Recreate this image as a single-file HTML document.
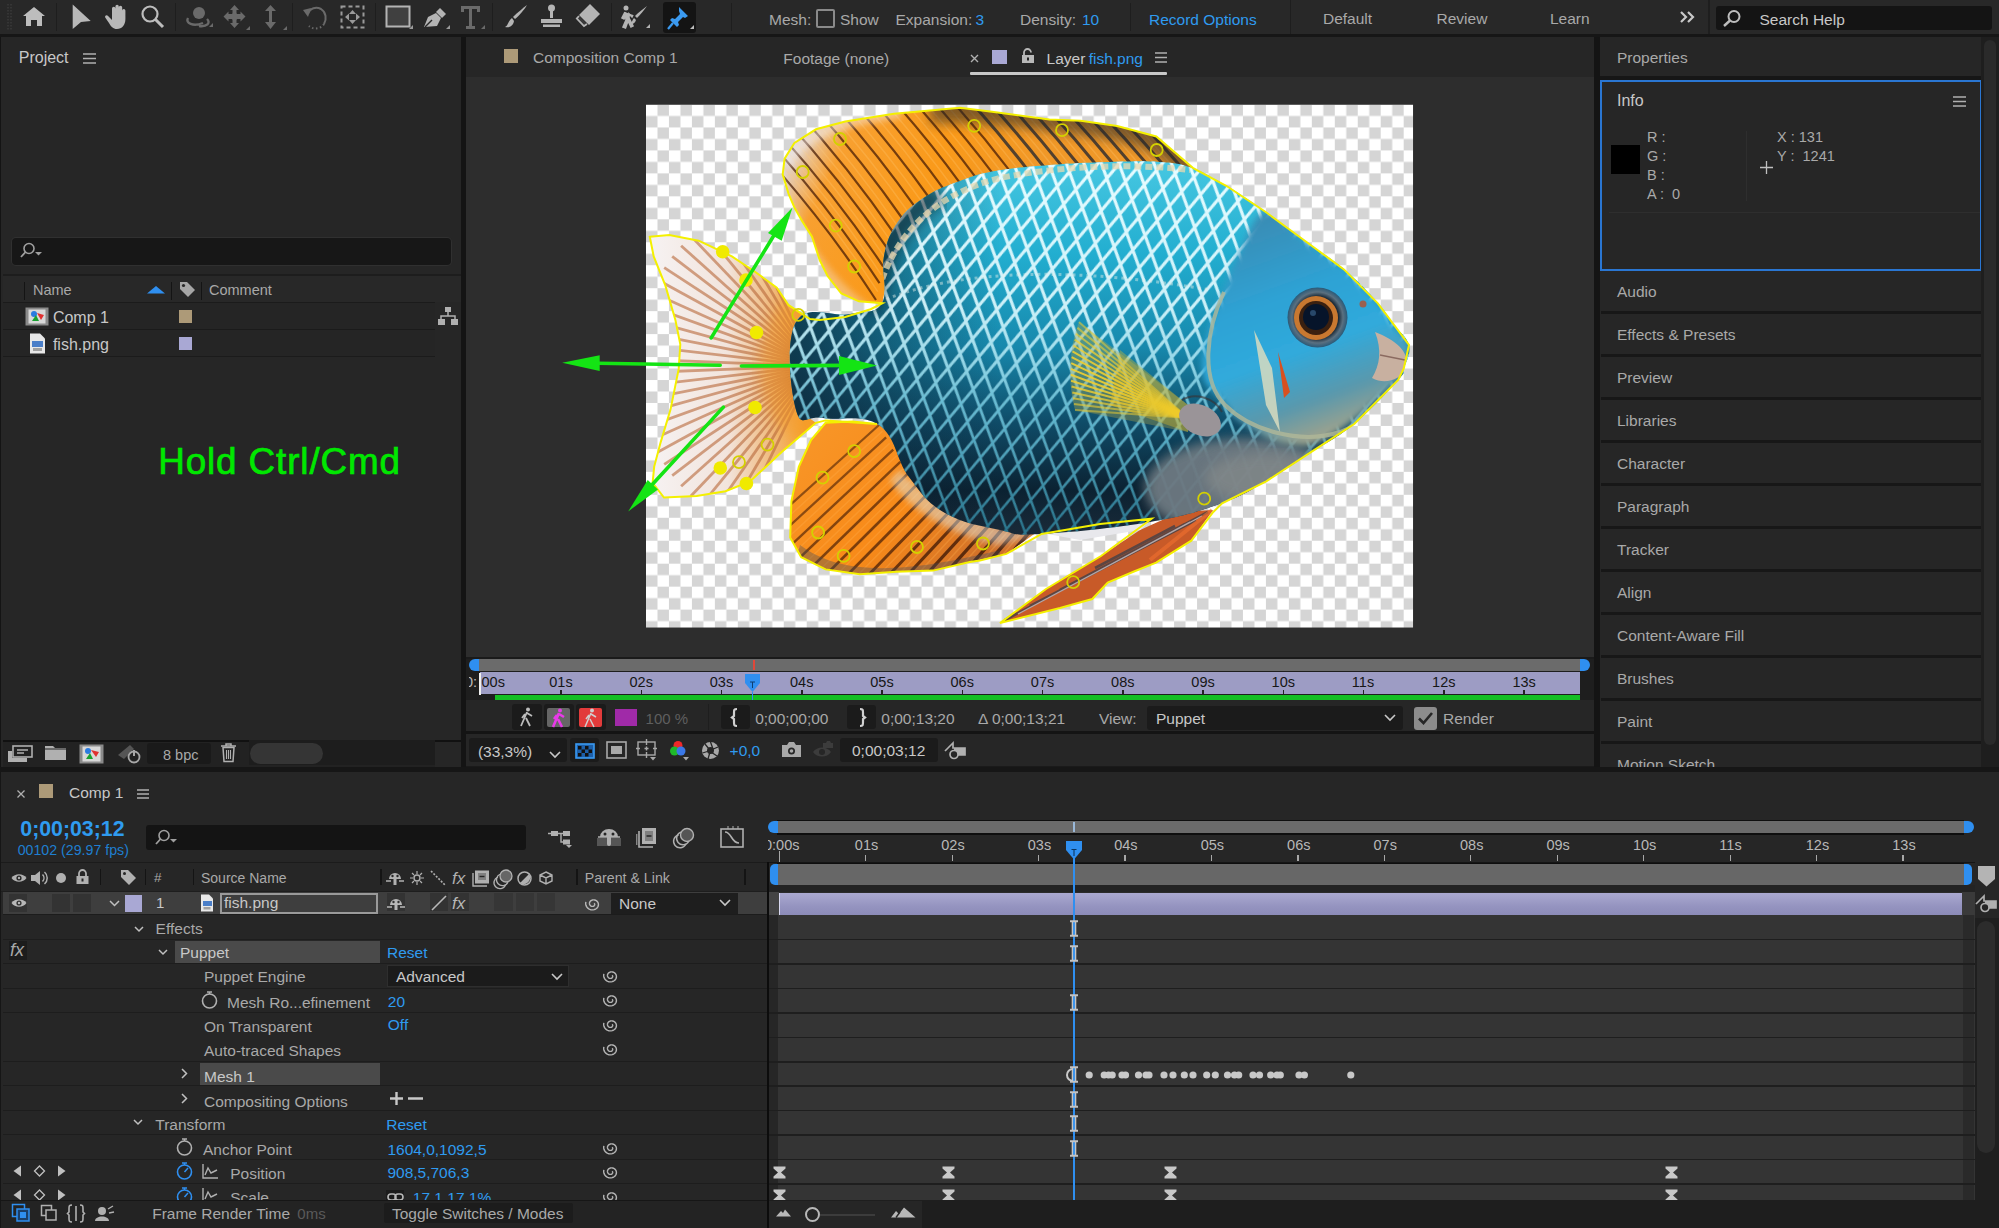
<!DOCTYPE html><html><head><meta charset="utf-8"><style>
html,body{margin:0;padding:0;width:1999px;height:1228px;overflow:hidden;background:#161616;font-family:"Liberation Sans",sans-serif;}
.t{position:absolute;white-space:nowrap;}
.r{position:absolute;}
.s{position:absolute;overflow:visible;}
</style></head><body>
<div class="r" style="left:0px;top:0px;width:1999px;height:34px;background:#282828;"></div>
<div class="r" style="left:56px;top:3px;width:1px;height:28px;background:#1e1e1e;"></div>
<div class="r" style="left:175px;top:3px;width:1px;height:28px;background:#1e1e1e;"></div>
<div class="r" style="left:292px;top:3px;width:1px;height:28px;background:#1e1e1e;"></div>
<div class="r" style="left:375px;top:3px;width:1px;height:28px;background:#1e1e1e;"></div>
<div class="r" style="left:492px;top:3px;width:1px;height:28px;background:#1e1e1e;"></div>
<div class="r" style="left:611px;top:3px;width:1px;height:28px;background:#1e1e1e;"></div>
<div class="r" style="left:731px;top:3px;width:1px;height:28px;background:#1e1e1e;"></div>
<div class="r" style="left:1130px;top:3px;width:1px;height:28px;background:#1e1e1e;"></div>
<div class="r" style="left:1290px;top:0px;width:1px;height:34px;background:#1e1e1e;"></div>
<div class="r" style="left:1708px;top:0px;width:2px;height:34px;background:#1e1e1e;"></div>
<div class="t " style="left:769px;top:11.5px;font-size:15.5px;line-height:15.5px;color:#a9a9a9;font-weight:normal;">Mesh:</div>
<div class="r" style="left:816px;top:9px;width:19px;height:19px;background:transparent;border:2px solid #8a8a8a;border-radius:2px;box-sizing:border-box;"></div>
<div class="t " style="left:840px;top:11.5px;font-size:15.5px;line-height:15.5px;color:#a9a9a9;font-weight:normal;">Show</div>
<div class="t " style="left:895.5px;top:11.5px;font-size:15.5px;line-height:15.5px;color:#a9a9a9;font-weight:normal;">Expansion:</div>
<div class="t " style="left:975.5px;top:11.5px;font-size:15.5px;line-height:15.5px;color:#2f9bf0;font-weight:normal;">3</div>
<div class="t " style="left:1020px;top:11.5px;font-size:15.5px;line-height:15.5px;color:#a9a9a9;font-weight:normal;">Density:</div>
<div class="t " style="left:1082px;top:11.5px;font-size:15.5px;line-height:15.5px;color:#2f9bf0;font-weight:normal;">10</div>
<div class="t " style="left:1149px;top:11.5px;font-size:15.5px;line-height:15.5px;color:#2f9bf0;font-weight:normal;">Record Options</div>
<div class="t " style="left:1323px;top:11.4px;font-size:15.5px;line-height:15.5px;color:#a9a9a9;font-weight:normal;">Default</div>
<div class="t " style="left:1436.5px;top:11.4px;font-size:15.5px;line-height:15.5px;color:#a9a9a9;font-weight:normal;">Review</div>
<div class="t " style="left:1550px;top:11.4px;font-size:15.5px;line-height:15.5px;color:#a9a9a9;font-weight:normal;">Learn</div>
<svg class="s" style="left:1680px;top:11px;" width="16" height="12" viewBox="0 0 16 12"><path d="M1 1 L6 6 L1 11 M8 1 L13 6 L8 11" stroke="#c8c8c8" stroke-width="2.2" fill="none"/></svg>
<div class="r" style="left:1716px;top:6px;width:276px;height:24px;background:#141414;border-radius:3px;"></div>
<svg class="s" style="left:1722px;top:10px;" width="20" height="17" viewBox="0 0 20 17"><circle cx="12" cy="6.5" r="5.5" stroke="#bdbdbd" stroke-width="2" fill="none"/><path d="M8 10.5 L2 16" stroke="#bdbdbd" stroke-width="2.4"/></svg>
<div class="t " style="left:1759.5px;top:12.3px;font-size:15.5px;line-height:15.5px;color:#c8c8c8;font-weight:normal;">Search Help</div>
<svg class="s" style="left:7px;top:4px;" width="5" height="26" viewBox="0 0 5 26"><path d="M1 0 V26 M4 0 V26" stroke="#3a3a3a" stroke-width="1.5" stroke-dasharray="1.5 1.5"/></svg>
<svg class="s" style="left:22px;top:6px;" width="24" height="21" viewBox="0 0 24 21"><path d="M12 1 L1 10 H4 V20 H9 V14 H15 V20 H20 V10 H23 Z" fill="#bdbdbd"/></svg>
<svg class="s" style="left:70px;top:3px;" width="24" height="28" viewBox="0 0 24 28"><path d="M2.7 1.4 L20.7 18 L11 18.9 L2.7 25.9Z" fill="#b8b8b8"/></svg>
<svg class="s" style="left:103px;top:4px;" width="26" height="26" viewBox="0 0 26 26"><path d="M9 13 V4.5 a1.7 1.7 0 0 1 3.4 0 V11 V2.5 a1.7 1.7 0 0 1 3.4 0 V11 V3.5 a1.7 1.7 0 0 1 3.4 0 V12 V6.5 a1.6 1.6 0 0 1 3.2 0 V15 C22.4 21 19 25 14 25 C10 25 8 22.5 6 19 L2.2 13.5 a1.6 1.6 0 0 1 2.6 -1.8 L9 16Z" fill="#b8b8b8"/></svg>
<svg class="s" style="left:140px;top:4px;" width="25" height="25" viewBox="0 0 25 25"><circle cx="10" cy="10" r="7.5" stroke="#bdbdbd" stroke-width="2.2" fill="none"/><path d="M15.5 15.5 L23 23" stroke="#bdbdbd" stroke-width="3"/></svg>
<svg class="s" style="left:185px;top:5px;" width="28" height="24" viewBox="0 0 28 24"><circle cx="14" cy="8" r="6" fill="#6a6a6a"/><path d="M3 13 C0 18 8 22 18 18 M22 14 C26 18 22 22 14 21" stroke="#6a6a6a" stroke-width="2.4" fill="none"/><path d="M24 22 L28 22 L28 18Z" fill="#6a6a6a"/></svg>
<svg class="s" style="left:222px;top:4px;" width="28" height="26" viewBox="0 0 28 26"><path d="M12.5 1 L17 6 H14.5 V10 H18.5 V7.5 L23.5 12.5 L18.5 17.5 V15 H14.5 V19 H17 L12.5 24 L8 19 H10.5 V15 H6.5 V17.5 L1.5 12.5 L6.5 7.5 V10 H10.5 V6 H8Z" fill="#6a6a6a"/><circle cx="12.5" cy="12.5" r="3.5" fill="#6a6a6a"/><path d="M24 26 L28 26 L28 22Z" fill="#6a6a6a"/></svg>
<svg class="s" style="left:261px;top:4px;" width="26" height="26" viewBox="0 0 26 26"><path d="M9.5 1 L15 7 H11 V18 H15 L9.5 25 L4 18 H8 V7 H4Z" fill="#6a6a6a"/><path d="M22 26 L26 26 L26 22Z" fill="#6a6a6a"/></svg>
<svg class="s" style="left:302px;top:4px;" width="26" height="26" viewBox="0 0 26 26"><path d="M6 10 C8 4 14 2.5 19 5 C24 8 25 15 22 20" stroke="#6a6a6a" stroke-width="2" fill="none"/><path d="M22 20 C19 25 11 26 7 22" stroke="#6a6a6a" stroke-width="2" fill="none" stroke-dasharray="1.5 2.5"/><path d="M1 6 L9 4 L6 13Z" fill="#6a6a6a"/></svg>
<svg class="s" style="left:340px;top:5px;" width="25" height="24" viewBox="0 0 25 24"><rect x="1.5" y="1.5" width="22" height="21" stroke="#9a9a9a" stroke-width="2" fill="none" stroke-dasharray="4 3"/><path d="M12.5 5 L9 9 H16Z M12.5 19 L9 15 H16Z M5 12 L9 8.5 V15.5Z M20 12 L16 8.5 V15.5Z" fill="#9a9a9a"/></svg>
<svg class="s" style="left:385px;top:5px;" width="29" height="25" viewBox="0 0 29 25"><rect x="1.5" y="1.5" width="23" height="20" stroke="#b4b4b4" stroke-width="2" fill="#404040"/><path d="M24 24 L28 24 L28 20Z" fill="#9a9a9a"/></svg>
<svg class="s" style="left:422px;top:4px;" width="28" height="26" viewBox="0 0 28 26"><path d="M2 23 L6 13 L14 9 L19 14 L15 22 Z" fill="#b4b4b4"/><path d="M14 8 L18 4 L24 10 L20 14Z" fill="#b4b4b4"/><path d="M3 23 L10 16" stroke="#282828" stroke-width="1.5"/><path d="M24 25 L28 25 L28 21Z" fill="#9a9a9a"/></svg>
<svg class="s" style="left:459px;top:5px;" width="27" height="25" viewBox="0 0 27 25"><path d="M2 1 H21 V7 H18 V4 H13 V21 H16 V24 H7 V21 H10 V4 H5 V7 H2Z" fill="#6a6a6a"/><path d="M22 24 L26 24 L26 20Z" fill="#6a6a6a"/></svg>
<svg class="s" style="left:504px;top:4px;" width="24" height="25" viewBox="0 0 24 25"><path d="M23 1 C20 6 15 12 11 15 L9 13 C13 9 19 4 23 1Z" fill="#b4b4b4"/><path d="M8 14 L10 17 C9 23 4 24 1 23 C4 22 4 17 8 14Z" fill="#b4b4b4"/></svg>
<svg class="s" style="left:539px;top:4px;" width="25" height="23" viewBox="0 0 25 23"><circle cx="12.5" cy="4" r="3.5" fill="#b4b4b4"/><path d="M11 7 H14 V14 H11Z M2 15 H23 V19 H2Z M4 20.5 H21 V23 H4Z" fill="#b4b4b4"/></svg>
<svg class="s" style="left:576px;top:3px;" width="25" height="26" viewBox="0 0 25 26"><path d="M14 1 L24 11 L13 22 L3 12Z" fill="#b4b4b4"/><path d="M3 13 L0.8 15.5 L8 23 L11 21" stroke="#b4b4b4" stroke-width="1.8" fill="#3a3a3a"/></svg>
<svg class="s" style="left:620px;top:4px;" width="30" height="25" viewBox="0 0 30 25"><circle cx="6" cy="4" r="2.5" fill="#b4b4b4"/><path d="M5 8 L2 14 L4 15 L6 11 L6 16 L3 23 L5.5 24 L8 17 L11 23 L13 22 L9 14 L9 10 L12 13 L13 11" stroke="#b4b4b4" stroke-width="1.6" fill="#b4b4b4"/><path d="M27 2 C24 6 20 11 17 14 L15 12 C18 9 23 5 27 2Z M14 14 L16 16 C15 20 11 21 10 20 C12 19 12 16 14 14Z" fill="#b4b4b4"/><path d="M26 24 L30 24 L30 20Z" fill="#b4b4b4"/></svg>
<div class="r" style="left:663px;top:2px;width:33px;height:31px;background:#141414;border-radius:3px;"></div>
<svg class="s" style="left:666px;top:5px;" width="28" height="26" viewBox="0 0 28 26"><path d="M13 2 L22 11 L19 13 L17 12 L12 17 L13 20 L11 22 L4 15 L6 13 L9 14 L14 9 L13 6Z" fill="#3b9af0"/><path d="M7 18 L2 24" stroke="#3b9af0" stroke-width="2.2"/><path d="M24 24 L28 24 L28 20Z" fill="#bdbdbd"/></svg>
<div class="r" style="left:0px;top:34px;width:1999px;height:3px;background:#161616;"></div>
<div class="r" style="left:1px;top:37px;width:460px;height:730px;background:#262626;"></div>
<div class="t " style="left:18.75px;top:50.2px;font-size:16px;line-height:16px;color:#c8c8c8;font-weight:normal;">Project</div>
<svg class="s" style="left:83px;top:53px;" width="13" height="11" viewBox="0 0 13 11"><path d="M0 1 H13 M0 5.5 H13 M0 10 H13" stroke="#b0b0b0" stroke-width="1.6"/></svg>
<div class="r" style="left:12px;top:238px;width:439px;height:26.5px;background:#171717;border-radius:4px;box-shadow:0 0 0 1px #303030;"></div>
<svg class="s" style="left:20px;top:242px;" width="26" height="18" viewBox="0 0 26 18"><circle cx="9" cy="6.5" r="5" stroke="#a0a0a0" stroke-width="1.6" fill="none"/><path d="M5.5 10 L1 15" stroke="#a0a0a0" stroke-width="1.8"/><path d="M15 10 H22 L18.5 13.5Z" fill="#a0a0a0"/></svg>
<div class="r" style="left:3px;top:274px;width:458px;height:1.5px;background:#1d1d1d;"></div>
<div class="r" style="left:3px;top:275.5px;width:458px;height:26.5px;background:#282828;"></div>
<div class="r" style="left:3px;top:302px;width:432px;height:1px;background:#1b1b1b;"></div>
<div class="r" style="left:24px;top:282px;width:1px;height:18px;background:#141414;"></div>
<div class="r" style="left:171px;top:282px;width:1px;height:18px;background:#141414;"></div>
<div class="r" style="left:201px;top:282px;width:1px;height:18px;background:#141414;"></div>
<div class="t " style="left:33px;top:282.7px;font-size:14.5px;line-height:14.5px;color:#a9a9a9;font-weight:normal;">Name</div>
<svg class="s" style="left:147px;top:286px;" width="18" height="8" viewBox="0 0 18 8"><path d="M0 7.5 L9 0 L18 7.5Z" fill="#2f8ff0"/></svg>
<svg class="s" style="left:179px;top:281px;" width="17" height="17" viewBox="0 0 17 17"><path d="M1 1 H8 L16 9 L9 16 L1 8Z" fill="#a6a6a6"/><circle cx="4.5" cy="4.5" r="1.6" fill="#262626"/></svg>
<div class="t " style="left:209px;top:282.7px;font-size:14.5px;line-height:14.5px;color:#a9a9a9;font-weight:normal;">Comment</div>
<div class="r" style="left:3px;top:303px;width:432px;height:26px;background:#252525;"></div>
<div class="r" style="left:3px;top:329px;width:432px;height:1px;background:#1b1b1b;"></div>
<div class="r" style="left:3px;top:330px;width:432px;height:26px;background:#252525;"></div>
<div class="r" style="left:3px;top:356px;width:432px;height:1px;background:#1b1b1b;"></div>
<svg class="s" style="left:25px;top:307px;" width="24" height="19" viewBox="0 0 24 19"><rect x="0.5" y="0.5" width="23" height="18" fill="#8a8a8a"/><rect x="3.5" y="2.5" width="17" height="14" fill="#d8d8d8"/><circle cx="9" cy="7" r="3" fill="#2a7be0"/><path d="M7 14 L11 8 L14 14Z" fill="#18a030"/><path d="M12 6 L19 8 L16 13Z" fill="#e03030"/></svg>
<div class="t " style="left:52.9px;top:309.5px;font-size:16px;line-height:16px;color:#c8c8c8;font-weight:normal;">Comp 1</div>
<div class="r" style="left:179px;top:310px;width:13px;height:13px;background:#ad9a78;"></div>
<svg class="s" style="left:29px;top:333px;" width="17" height="21" viewBox="0 0 17 21"><path d="M1 0.5 H11 L16 5.5 V20.5 H1Z" fill="#e8e8e8"/><rect x="3" y="8" width="11" height="6" fill="#4a7ec8"/><rect x="4" y="15" width="9" height="3" fill="#a0a0a0"/></svg>
<div class="t " style="left:52.9px;top:336.5px;font-size:16px;line-height:16px;color:#c8c8c8;font-weight:normal;">fish.png</div>
<div class="r" style="left:179px;top:337px;width:13px;height:13px;background:#a9a8d4;"></div>
<svg class="s" style="left:438px;top:307px;" width="20" height="18" viewBox="0 0 20 18"><rect x="7" y="0" width="6" height="5" fill="#b0b0b0"/><path d="M10 5 V9 M3 12 V9 H17 V12" stroke="#b0b0b0" stroke-width="1.5" fill="none"/><rect x="0" y="12" width="7" height="6" fill="#b0b0b0"/><rect x="13" y="12" width="7" height="6" fill="#b0b0b0"/></svg>
<div class="t " style="left:158.2px;top:444.3px;font-size:36.8px;line-height:36.8px;color:#00e800;font-weight:normal;letter-spacing:0.9px;-webkit-text-stroke:0.7px #00e800;">Hold Ctrl/Cmd</div>
<div class="r" style="left:3px;top:740px;width:458px;height:1.5px;background:#111111;"></div>
<div class="r" style="left:3px;top:741.5px;width:432px;height:25px;background:#222222;"></div>
<svg class="s" style="left:7px;top:744px;" width="27" height="19" viewBox="0 0 27 19"><rect x="6" y="2" width="19" height="11" stroke="#b0b0b0" stroke-width="1.6" fill="none"/><path d="M10 6 H21 M10 9 H17" stroke="#b0b0b0" stroke-width="1.4"/><path d="M1 7 V18 H20 V14 H5 V7Z" fill="#b0b0b0"/></svg>
<svg class="s" style="left:45px;top:745px;" width="21" height="15" viewBox="0 0 21 15"><path d="M0 1 H8 L10 3 H21 V15 H0Z" fill="#b0b0b0"/><path d="M0 4 H21" stroke="#222" stroke-width="1"/></svg>
<svg class="s" style="left:79px;top:744px;" width="25" height="20" viewBox="0 0 25 20"><rect x="0.5" y="0.5" width="24" height="19" fill="#8a8a8a"/><rect x="3.5" y="2.5" width="18" height="15" fill="#d8d8d8"/><circle cx="9" cy="7" r="3" fill="#2a7be0"/><path d="M7 15 L11 9 L14 15Z" fill="#18a030"/><path d="M12 6 L20 8 L17 13Z" fill="#e03030"/></svg>
<svg class="s" style="left:116px;top:743px;" width="26" height="21" viewBox="0 0 26 21"><path d="M2 12 L14 2 L18 6 L8 16Z" fill="#555"/><circle cx="18" cy="14" r="5.5" stroke="#a8a8a8" stroke-width="1.8" fill="none"/><path d="M18 7 V13" stroke="#a8a8a8" stroke-width="2"/></svg>
<div class="r" style="left:147px;top:743px;width:64px;height:21px;background:#1a1a1a;border-radius:3px;"></div>
<div class="t " style="left:163px;top:747.7px;font-size:14.5px;line-height:14.5px;color:#a9a9a9;font-weight:normal;">8 bpc</div>
<svg class="s" style="left:220px;top:743px;" width="17" height="19" viewBox="0 0 17 19"><path d="M1 3 H16 M6 3 V1 H11 V3" stroke="#b0b0b0" stroke-width="1.5" fill="none"/><path d="M3 4.5 H14 L13 18.5 H4Z" stroke="#b0b0b0" stroke-width="1.5" fill="none"/><path d="M6.5 7 V16 M8.5 7 V16 M10.5 7 V16" stroke="#b0b0b0" stroke-width="1.1"/></svg>
<div class="r" style="left:249px;top:740px;width:186px;height:25px;background:#1d1d1d;"></div>
<div class="r" style="left:250px;top:743px;width:73px;height:21px;background:#353535;border-radius:11px;"></div>
<div class="r" style="left:466px;top:37px;width:1128px;height:730px;background:#262626;"></div>
<div class="r" style="left:466px;top:77px;width:1128px;height:581px;background:#2d2d2d;"></div>
<div class="r" style="left:504px;top:49px;width:14px;height:14px;background:#ad9a78;"></div>
<div class="t " style="left:533px;top:50.1px;font-size:15.5px;line-height:15.5px;color:#a9a9a9;font-weight:normal;">Composition Comp 1</div>
<div class="t " style="left:783.3px;top:50.6px;font-size:15.5px;line-height:15.5px;color:#a9a9a9;font-weight:normal;">Footage (none)</div>
<svg class="s" style="left:970px;top:54px;" width="9" height="9" viewBox="0 0 9 9"><path d="M1 1 L8 8 M8 1 L1 8" stroke="#b0b0b0" stroke-width="1.4"/></svg>
<div class="r" style="left:992px;top:50px;width:15px;height:14px;background:#a9a8d4;"></div>
<svg class="s" style="left:1021px;top:48px;" width="14" height="15" viewBox="0 0 14 15"><path d="M3 7 V4.5 A3.5 3.5 0 0 1 10 4.5" stroke="#b8b8b8" stroke-width="1.8" fill="none"/><rect x="1" y="7" width="12" height="8" fill="#b8b8b8"/><rect x="6" y="9.5" width="2" height="3" fill="#232323"/></svg>
<div class="t " style="left:1046.6px;top:50.6px;font-size:15.5px;line-height:15.5px;color:#c8c8c8;font-weight:normal;">Layer</div>
<div class="t " style="left:1088.7px;top:50.6px;font-size:15.5px;line-height:15.5px;color:#2f9bf0;font-weight:normal;">fish.png</div>
<svg class="s" style="left:1155px;top:52px;" width="12" height="11" viewBox="0 0 12 11"><path d="M0 1 H12 M0 5.5 H12 M0 10 H12" stroke="#b0b0b0" stroke-width="1.6"/></svg>
<div class="r" style="left:970px;top:72px;width:197px;height:3px;background:#c8c8c8;border-radius:1px;"></div>
<div class="r" style="left:466px;top:657px;width:1128px;height:2px;background:#1a1a1a;"></div>
<div class="r" style="left:466px;top:659px;width:1128px;height:41px;background:#1e1e1e;"></div>
<div class="r" style="left:479px;top:659px;width:1101px;height:11.5px;background:#6b6b6b;"></div>
<svg class="s" style="left:469px;top:659px;" width="11" height="12" viewBox="0 0 11 12"><path d="M10 0 V12 H6 A6 6 0 0 1 6 0Z" fill="#2f8ff0"/></svg>
<svg class="s" style="left:1580px;top:659px;" width="11" height="12" viewBox="0 0 11 12"><path d="M0 0 V12 H4 A6 6 0 0 0 4 0Z" fill="#2f8ff0"/></svg>
<div class="r" style="left:753px;top:660px;width:2px;height:10px;background:#e0483a;"></div>
<div class="r" style="left:479.5px;top:672px;width:1100.5px;height:22px;background:#9d9cc4;"></div>
<div class="r" style="left:469px;top:672px;width:10px;height:22px;overflow:hidden;"><div class="t" style="left:-4px;top:3.2px;font-size:14.5px;line-height:14.5px;color:#bdbdbd;">0:</div></div>
<div class="r" style="left:479px;top:673px;width:2px;height:22px;background:#f0f0f0;"></div>
<div class="t " style="left:481.5px;top:675.2px;font-size:14.5px;line-height:14.5px;color:#161616;font-weight:normal;">00s</div>
<div class="t " style="left:549.26px;top:675.2px;font-size:14.5px;line-height:14.5px;color:#161616;font-weight:normal;">01s</div>
<div class="r" style="left:560.26px;top:690px;width:1.5px;height:4px;background:#222;"></div>
<div class="t " style="left:629.52px;top:675.2px;font-size:14.5px;line-height:14.5px;color:#161616;font-weight:normal;">02s</div>
<div class="r" style="left:640.52px;top:690px;width:1.5px;height:4px;background:#222;"></div>
<div class="t " style="left:709.78px;top:675.2px;font-size:14.5px;line-height:14.5px;color:#161616;font-weight:normal;">03s</div>
<div class="r" style="left:720.78px;top:690px;width:1.5px;height:4px;background:#222;"></div>
<div class="t " style="left:790.04px;top:675.2px;font-size:14.5px;line-height:14.5px;color:#161616;font-weight:normal;">04s</div>
<div class="r" style="left:801.04px;top:690px;width:1.5px;height:4px;background:#222;"></div>
<div class="t " style="left:870.3px;top:675.2px;font-size:14.5px;line-height:14.5px;color:#161616;font-weight:normal;">05s</div>
<div class="r" style="left:881.3px;top:690px;width:1.5px;height:4px;background:#222;"></div>
<div class="t " style="left:950.5600000000001px;top:675.2px;font-size:14.5px;line-height:14.5px;color:#161616;font-weight:normal;">06s</div>
<div class="r" style="left:961.5600000000001px;top:690px;width:1.5px;height:4px;background:#222;"></div>
<div class="t " style="left:1030.8200000000002px;top:675.2px;font-size:14.5px;line-height:14.5px;color:#161616;font-weight:normal;">07s</div>
<div class="r" style="left:1041.8200000000002px;top:690px;width:1.5px;height:4px;background:#222;"></div>
<div class="t " style="left:1111.08px;top:675.2px;font-size:14.5px;line-height:14.5px;color:#161616;font-weight:normal;">08s</div>
<div class="r" style="left:1122.08px;top:690px;width:1.5px;height:4px;background:#222;"></div>
<div class="t " style="left:1191.3400000000001px;top:675.2px;font-size:14.5px;line-height:14.5px;color:#161616;font-weight:normal;">09s</div>
<div class="r" style="left:1202.3400000000001px;top:690px;width:1.5px;height:4px;background:#222;"></div>
<div class="t " style="left:1271.6px;top:675.2px;font-size:14.5px;line-height:14.5px;color:#161616;font-weight:normal;">10s</div>
<div class="r" style="left:1282.6px;top:690px;width:1.5px;height:4px;background:#222;"></div>
<div class="t " style="left:1351.8600000000001px;top:675.2px;font-size:14.5px;line-height:14.5px;color:#161616;font-weight:normal;">11s</div>
<div class="r" style="left:1362.8600000000001px;top:690px;width:1.5px;height:4px;background:#222;"></div>
<div class="t " style="left:1432.1200000000001px;top:675.2px;font-size:14.5px;line-height:14.5px;color:#161616;font-weight:normal;">12s</div>
<div class="r" style="left:1443.1200000000001px;top:690px;width:1.5px;height:4px;background:#222;"></div>
<div class="t " style="left:1512.38px;top:675.2px;font-size:14.5px;line-height:14.5px;color:#161616;font-weight:normal;">13s</div>
<div class="r" style="left:1523.38px;top:690px;width:1.5px;height:4px;background:#222;"></div>
<div class="r" style="left:495px;top:695px;width:1085px;height:4.5px;background:#14bf23;"></div>
<svg class="s" style="left:745px;top:674px;" width="16" height="26" viewBox="0 0 16 26"><path d="M0 0 H15 V9 L7.5 18 L0 9Z" fill="#2f8ff0"/><path d="M5 8 H10 M7.5 8 V14" stroke="#0d3f70" stroke-width="1"/><path d="M7.5 18 V26" stroke="#2f8ff0" stroke-width="1"/></svg>
<div class="r" style="left:466px;top:700px;width:1128px;height:31px;background:#262626;"></div>
<div class="r" style="left:466px;top:731px;width:1128px;height:3px;background:#141414;"></div>
<div class="r" style="left:512px;top:704px;width:30px;height:26px;background:#1b1b1b;border-radius:3px;"></div>
<svg class="s" style="left:518px;top:707px;" width="18" height="20" viewBox="0 0 18 20"><circle cx="10" cy="2.5" r="2" fill="#bdbdbd"/><path d="M9 5 L6 12 L3 19 M8 11 L12 19 M9 6 L14 9 M7 7 L4 11" stroke="#bdbdbd" stroke-width="1.8" fill="none"/></svg>
<div class="r" style="left:544px;top:704px;width:30px;height:26px;background:#1b1b1b;border-radius:3px;"></div>
<div class="r" style="left:547px;top:708px;width:23px;height:19px;background:#666;border-radius:2px;"></div>
<svg class="s" style="left:550px;top:708px;" width="18" height="20" viewBox="0 0 18 20"><circle cx="10" cy="2.5" r="2" fill="#e83ae8"/><path d="M9 5 L6 12 L3 19 M8 11 L12 19 M9 6 L14 9 M7 7 L4 11" stroke="#e83ae8" stroke-width="2.6" fill="none"/></svg>
<div class="r" style="left:576px;top:704px;width:30px;height:26px;background:#1b1b1b;border-radius:3px;"></div>
<div class="r" style="left:579px;top:708px;width:23px;height:19px;background:#e23b3b;border-radius:2px;"></div>
<svg class="s" style="left:582px;top:708px;" width="18" height="20" viewBox="0 0 18 20"><circle cx="10" cy="2.5" r="2" fill="#cfcfcf"/><path d="M9 5 L6 12 L3 19 M8 11 L12 19 M9 6 L14 9 M7 7 L4 11" stroke="#cfcfcf" stroke-width="1.5" fill="none"/></svg>
<div class="r" style="left:615px;top:708.5px;width:22px;height:17.5px;background:#a02aa8;"></div>
<div class="t " style="left:645.6px;top:710.9px;font-size:15px;line-height:15px;color:#5f5f5f;font-weight:normal;">100 %</div>
<div class="r" style="left:708px;top:704px;width:1px;height:26px;background:#1e1e1e;"></div>
<div class="r" style="left:721px;top:705px;width:29px;height:24px;background:#1b1b1b;border-radius:3px;"></div>
<svg class="s" style="left:731px;top:708px;" width="9" height="19" viewBox="0 0 9 19"><path d="M6 1 C3 1 3 2 3 5 V8 L1 9.5 L3 11 V14 C3 17 3 18 6 18" stroke="#d0d0d0" stroke-width="2.2" fill="none"/></svg>
<div class="t " style="left:755.2px;top:710.6px;font-size:15.5px;line-height:15.5px;color:#a9a9a9;font-weight:normal;">0;00;00;00</div>
<div class="r" style="left:847px;top:705px;width:29px;height:24px;background:#1b1b1b;border-radius:3px;"></div>
<svg class="s" style="left:857px;top:708px;" width="9" height="19" viewBox="0 0 9 19"><path d="M3 1 C6 1 6 2 6 5 V8 L8 9.5 L6 11 V14 C6 17 6 18 3 18" stroke="#d0d0d0" stroke-width="2.2" fill="none"/></svg>
<div class="t " style="left:881.3px;top:710.6px;font-size:15.5px;line-height:15.5px;color:#a9a9a9;font-weight:normal;">0;00;13;20</div>
<div class="t " style="left:978.1px;top:710.6px;font-size:15.5px;line-height:15.5px;color:#a9a9a9;font-weight:normal;">&#916; 0;00;13;21</div>
<div class="t " style="left:1099px;top:710.6px;font-size:15.5px;line-height:15.5px;color:#a9a9a9;font-weight:normal;">View:</div>
<div class="r" style="left:1147px;top:706px;width:256px;height:24px;background:#1b1b1b;border-radius:3px;"></div>
<div class="t " style="left:1156px;top:710.6px;font-size:15.5px;line-height:15.5px;color:#c8c8c8;font-weight:normal;">Puppet</div>
<svg class="s" style="left:1384px;top:714px;" width="12" height="8" viewBox="0 0 12 8"><path d="M1 1 L6 6 L11 1" stroke="#c8c8c8" stroke-width="1.6" fill="none"/></svg>
<div class="r" style="left:1414px;top:707px;width:23px;height:23px;background:#8c8c8c;border-radius:3px;"></div>
<svg class="s" style="left:1417px;top:711px;" width="17" height="15" viewBox="0 0 17 15"><path d="M2 7.5 L6.5 12 L15 2" stroke="#262626" stroke-width="2.6" fill="none"/></svg>
<div class="t " style="left:1443px;top:710.6px;font-size:15.5px;line-height:15.5px;color:#a9a9a9;font-weight:normal;">Render</div>
<div class="r" style="left:466px;top:734px;width:1128px;height:32px;background:#262626;"></div>
<div class="r" style="left:469.4px;top:737.7px;width:98px;height:24.6px;background:#1b1b1b;border-radius:3px;"></div>
<div class="t " style="left:477.9px;top:744.1px;font-size:15.5px;line-height:15.5px;color:#c8c8c8;font-weight:normal;">(33,3%)</div>
<svg class="s" style="left:549px;top:751px;" width="12" height="8" viewBox="0 0 12 8"><path d="M1 1 L6 6 L11 1" stroke="#c8c8c8" stroke-width="1.6" fill="none"/></svg>
<div class="r" style="left:570px;top:738px;width:29px;height:24px;background:#1b1b1b;border-radius:3px;"></div>
<svg class="s" style="left:575px;top:743px;" width="20" height="16" viewBox="0 0 20 16"><rect x="1" y="1" width="18" height="14" fill="#1d5fa8" stroke="#3a9af2" stroke-width="1.6"/><rect x="3" y="3" width="3.5" height="3.5" fill="#111"/><rect x="10" y="3" width="3.5" height="3.5" fill="#111"/><rect x="6.5" y="6.5" width="3.5" height="3.5" fill="#111"/><rect x="13.5" y="6.5" width="3.5" height="3.5" fill="#111"/><rect x="3" y="10" width="3.5" height="3.5" fill="#111"/><rect x="10" y="10" width="3.5" height="3.5" fill="#111"/></svg>
<svg class="s" style="left:606px;top:741px;" width="21" height="18" viewBox="0 0 21 18"><rect x="1" y="1" width="19" height="16" fill="none" stroke="#a8a8a8" stroke-width="1.6"/><rect x="5" y="5" width="11" height="8" fill="#a8a8a8"/></svg>
<svg class="s" style="left:636px;top:739px;" width="22" height="22" viewBox="0 0 22 22"><rect x="2" y="3" width="17" height="13" fill="none" stroke="#a8a8a8" stroke-width="1.4"/><path d="M10.5 0 V6 M10.5 13 V19 M0 9.5 H4 M17 9.5 H21 M8.5 9.5 H12.5 M10.5 7.5 V11.5" stroke="#a8a8a8" stroke-width="1.4"/><path d="M14 18 H20 L17 21.5Z" fill="#a8a8a8"/></svg>
<svg class="s" style="left:670px;top:740px;" width="20" height="22" viewBox="0 0 20 22"><circle cx="8" cy="5.5" r="4.5" fill="#f0282a"/><circle cx="4.5" cy="11" r="4.5" fill="#1fb82a"/><circle cx="11" cy="11" r="4.5" fill="#3a78e8"/><path d="M13 17 H19 L16 20.5Z" fill="#a8a8a8"/></svg>
<svg class="s" style="left:701px;top:741px;" width="19" height="19" viewBox="0 0 19 19"><circle cx="9.5" cy="9.5" r="8.5" fill="#a8a8a8"/><circle cx="9.5" cy="9.5" r="3.5" fill="#262626"/><path d="M9.5 1 L12 8 M17 6 L10 9 M16 15 L10 11 M7 18 L9 11 M1.5 12 L8 10 M4 3 L8 8" stroke="#262626" stroke-width="1.3"/></svg>
<div class="t " style="left:729.6px;top:743.4px;font-size:15.5px;line-height:15.5px;color:#2f9bf0;font-weight:normal;">+0,0</div>
<svg class="s" style="left:781px;top:741px;" width="21" height="17" viewBox="0 0 21 17"><path d="M1 4 H6 L8 1 H13 L15 4 H20 V16 H1Z" fill="#a8a8a8"/><circle cx="10.5" cy="10" r="3.5" fill="#262626"/><circle cx="10.5" cy="10" r="1.8" fill="#a8a8a8"/></svg>
<svg class="s" style="left:812px;top:739px;" width="21" height="20" viewBox="0 0 21 20"><path d="M1 13 C5 7 15 7 19 13 C15 19 5 19 1 13Z" fill="#3c3c3c"/><circle cx="10" cy="13" r="3" fill="#262626"/><path d="M11 4 H14 L15 2 H18 L19 4 H21 V9 H11Z" fill="#3c3c3c"/></svg>
<div class="r" style="left:840.3px;top:737.7px;width:98px;height:24.6px;background:#1b1b1b;border-radius:3px;"></div>
<div class="t " style="left:852px;top:743.4px;font-size:15.5px;line-height:15.5px;color:#c8c8c8;font-weight:normal;">0;00;03;12</div>
<svg class="s" style="left:944px;top:741px;" width="22" height="20" viewBox="0 0 22 20"><path d="M1 10 L9 2 V7 H21 V14 H9" fill="none" stroke="#b0b0b0" stroke-width="1.7"/><path d="M10 7 H21 V14 H10Z" fill="#b0b0b0"/><circle cx="10" cy="13.5" r="4" fill="#262626" stroke="#b0b0b0" stroke-width="1.7"/></svg>
<div class="r" style="left:466px;top:766px;width:1128px;height:1px;background:#1a1a1a;"></div>
<div class="r" style="left:1600px;top:37px;width:381px;height:39px;background:#262626;"></div>
<div class="t " style="left:1617px;top:50.4px;font-size:15.5px;line-height:15.5px;color:#a9a9a9;font-weight:normal;">Properties</div>
<div class="r" style="left:1600px;top:76px;width:381px;height:4px;background:#161616;"></div>
<div class="r" style="left:1600px;top:80px;width:382px;height:191px;background:#262626;border:2px solid #2a76d2;box-sizing:border-box;"></div>
<div class="t " style="left:1617px;top:93.0px;font-size:16px;line-height:16px;color:#c8c8c8;font-weight:normal;">Info</div>
<svg class="s" style="left:1953px;top:96px;" width="13" height="11" viewBox="0 0 13 11"><path d="M0 1 H13 M0 5.5 H13 M0 10 H13" stroke="#b0b0b0" stroke-width="1.6"/></svg>
<div class="r" style="left:1611px;top:145px;width:29px;height:29px;background:#000000;"></div>
<div class="t " style="left:1647px;top:129.7px;font-size:14.5px;line-height:14.5px;color:#a9a9a9;font-weight:normal;">R :</div>
<div class="t " style="left:1647px;top:148.7px;font-size:14.5px;line-height:14.5px;color:#a9a9a9;font-weight:normal;">G :</div>
<div class="t " style="left:1647px;top:167.7px;font-size:14.5px;line-height:14.5px;color:#a9a9a9;font-weight:normal;">B :</div>
<div class="t " style="left:1647px;top:186.7px;font-size:14.5px;line-height:14.5px;color:#a9a9a9;font-weight:normal;">A :&nbsp;&nbsp;0</div>
<div class="r" style="left:1746px;top:131px;width:1px;height:70px;background:#2e2e2e;"></div>
<div class="t " style="left:1777px;top:129.7px;font-size:14.5px;line-height:14.5px;color:#a9a9a9;font-weight:normal;">X : 131</div>
<div class="t " style="left:1777px;top:148.7px;font-size:14.5px;line-height:14.5px;color:#a9a9a9;font-weight:normal;">Y :&nbsp;&nbsp;1241</div>
<svg class="s" style="left:1759px;top:160px;" width="15" height="15" viewBox="0 0 15 15"><path d="M7.5 1 V14 M1 7.5 H14" stroke="#c0c0c0" stroke-width="1.3"/></svg>
<div class="r" style="left:1609px;top:212px;width:371px;height:1px;background:#2e2e2e;"></div>
<div class="r" style="left:1600px;top:271px;width:381px;height:43px;background:#262626;"></div>
<div class="r" style="left:1601px;top:311px;width:380px;height:3px;background:#171717;"></div>
<div class="t " style="left:1617px;top:284.4px;font-size:15.5px;line-height:15.5px;color:#a9a9a9;font-weight:normal;">Audio</div>
<div class="r" style="left:1600px;top:314px;width:381px;height:43px;background:#262626;"></div>
<div class="r" style="left:1601px;top:354px;width:380px;height:3px;background:#171717;"></div>
<div class="t " style="left:1617px;top:327.4px;font-size:15.5px;line-height:15.5px;color:#a9a9a9;font-weight:normal;">Effects &amp; Presets</div>
<div class="r" style="left:1600px;top:357px;width:381px;height:43px;background:#262626;"></div>
<div class="r" style="left:1601px;top:397px;width:380px;height:3px;background:#171717;"></div>
<div class="t " style="left:1617px;top:370.4px;font-size:15.5px;line-height:15.5px;color:#a9a9a9;font-weight:normal;">Preview</div>
<div class="r" style="left:1600px;top:400px;width:381px;height:43px;background:#262626;"></div>
<div class="r" style="left:1601px;top:440px;width:380px;height:3px;background:#171717;"></div>
<div class="t " style="left:1617px;top:413.4px;font-size:15.5px;line-height:15.5px;color:#a9a9a9;font-weight:normal;">Libraries</div>
<div class="r" style="left:1600px;top:443px;width:381px;height:43px;background:#262626;"></div>
<div class="r" style="left:1601px;top:483px;width:380px;height:3px;background:#171717;"></div>
<div class="t " style="left:1617px;top:456.4px;font-size:15.5px;line-height:15.5px;color:#a9a9a9;font-weight:normal;">Character</div>
<div class="r" style="left:1600px;top:486px;width:381px;height:43px;background:#262626;"></div>
<div class="r" style="left:1601px;top:526px;width:380px;height:3px;background:#171717;"></div>
<div class="t " style="left:1617px;top:499.4px;font-size:15.5px;line-height:15.5px;color:#a9a9a9;font-weight:normal;">Paragraph</div>
<div class="r" style="left:1600px;top:529px;width:381px;height:43px;background:#262626;"></div>
<div class="r" style="left:1601px;top:569px;width:380px;height:3px;background:#171717;"></div>
<div class="t " style="left:1617px;top:542.4px;font-size:15.5px;line-height:15.5px;color:#a9a9a9;font-weight:normal;">Tracker</div>
<div class="r" style="left:1600px;top:572px;width:381px;height:43px;background:#262626;"></div>
<div class="r" style="left:1601px;top:612px;width:380px;height:3px;background:#171717;"></div>
<div class="t " style="left:1617px;top:585.4px;font-size:15.5px;line-height:15.5px;color:#a9a9a9;font-weight:normal;">Align</div>
<div class="r" style="left:1600px;top:615px;width:381px;height:43px;background:#262626;"></div>
<div class="r" style="left:1601px;top:655px;width:380px;height:3px;background:#171717;"></div>
<div class="t " style="left:1617px;top:628.4px;font-size:15.5px;line-height:15.5px;color:#a9a9a9;font-weight:normal;">Content-Aware Fill</div>
<div class="r" style="left:1600px;top:658px;width:381px;height:43px;background:#262626;"></div>
<div class="r" style="left:1601px;top:698px;width:380px;height:3px;background:#171717;"></div>
<div class="t " style="left:1617px;top:671.4px;font-size:15.5px;line-height:15.5px;color:#a9a9a9;font-weight:normal;">Brushes</div>
<div class="r" style="left:1600px;top:701px;width:381px;height:43px;background:#262626;"></div>
<div class="r" style="left:1601px;top:741px;width:380px;height:3px;background:#171717;"></div>
<div class="t " style="left:1617px;top:714.4px;font-size:15.5px;line-height:15.5px;color:#a9a9a9;font-weight:normal;">Paint</div>
<div class="r" style="left:1600px;top:744px;width:381px;height:43px;background:#262626;"></div>
<div class="r" style="left:1601px;top:784px;width:380px;height:3px;background:#171717;"></div>
<div class="t " style="left:1617px;top:757.4px;font-size:15.5px;line-height:15.5px;color:#a9a9a9;font-weight:normal;">Motion Sketch</div>
<div class="r" style="left:1981px;top:37px;width:18px;height:730px;background:#1e1e1e;"></div>
<div class="r" style="left:1984px;top:40px;width:12px;height:705px;background:#2a2a2a;border-radius:6px;"></div>
<div class="r" style="left:1594px;top:37px;width:6px;height:730px;background:#141414;"></div>
<div class="r" style="left:461px;top:37px;width:5px;height:730px;background:#141414;"></div>
<div class="r" style="left:0px;top:37px;width:1px;height:730px;background:#141414;"></div>
<div class="r" style="left:0px;top:767px;width:1999px;height:5px;background:#161616;"></div>
<div class="r" style="left:1px;top:772px;width:1998px;height:456px;background:#262626;"></div>
<svg class="s" style="left:17px;top:790px;" width="8" height="8" viewBox="0 0 8 8"><path d="M0.5 0.5 L7.5 7.5 M7.5 0.5 L0.5 7.5" stroke="#b0b0b0" stroke-width="1.3"/></svg>
<div class="r" style="left:38.7px;top:784.3px;width:14.6px;height:14px;background:#ad9a78;"></div>
<div class="t " style="left:69px;top:785.1px;font-size:15.5px;line-height:15.5px;color:#c8c8c8;font-weight:normal;">Comp 1</div>
<svg class="s" style="left:137px;top:789px;" width="12" height="10" viewBox="0 0 12 10"><path d="M0 1 H12 M0 5 H12 M0 9 H12" stroke="#b0b0b0" stroke-width="1.6"/></svg>
<div class="t " style="left:20.3px;top:818.8px;font-size:21.3px;line-height:21.3px;color:#2f9bf0;font-weight:bold;">0;00;03;12</div>
<div class="t " style="left:17.7px;top:843.2px;font-size:14.2px;line-height:14.2px;color:#1f7fd0;font-weight:normal;">00102 (29.97 fps)</div>
<div class="r" style="left:146px;top:824.8px;width:380px;height:25px;background:#141414;border-radius:3px;"></div>
<svg class="s" style="left:155px;top:829px;" width="26" height="18" viewBox="0 0 26 18"><circle cx="9" cy="6.5" r="5" stroke="#a0a0a0" stroke-width="1.6" fill="none"/><path d="M5.5 10 L1 15" stroke="#a0a0a0" stroke-width="1.8"/><path d="M15 10 H22 L18.5 13.5Z" fill="#a0a0a0"/></svg>
<svg class="s" style="left:548px;top:829px;" width="25" height="19" viewBox="0 0 25 19"><rect x="3" y="2" width="7" height="5" fill="#b0b0b0"/><path d="M0 4.5 H3 M10 4.5 H13 V13 H16 M13 4.5 H16" stroke="#b0b0b0" stroke-width="1.4" fill="none"/><rect x="15" y="2" width="7" height="5" fill="#b0b0b0"/><rect x="15" y="10.5" width="7" height="5" fill="#b0b0b0"/><path d="M18 16 H24 L21 19Z" fill="#b0b0b0"/></svg>
<svg class="s" style="left:597px;top:828px;" width="24" height="18" viewBox="0 0 24 18"><path d="M3 9 A9 8 0 0 1 21 9 Z" fill="#b0b0b0"/><rect x="0" y="10" width="24" height="8" fill="#555"/><rect x="10" y="6" width="4" height="12" rx="2" fill="#b0b0b0"/><circle cx="8" cy="6" r="1.5" fill="#262626"/><circle cx="16" cy="6" r="1.5" fill="#262626"/><path d="M1 9 H23" stroke="#b0b0b0" stroke-width="1.5"/></svg>
<svg class="s" style="left:636px;top:827px;" width="21" height="21" viewBox="0 0 21 21"><rect x="6" y="1" width="14" height="16" fill="#b0b0b0"/><path d="M3 4 V20 H17" stroke="#b0b0b0" stroke-width="1.6" fill="none"/><path d="M0.8 7 V18" stroke="#b0b0b0" stroke-width="1" /><rect x="9" y="4" width="8" height="10" fill="#808080"/><path d="M10.5 9 H15.5" stroke="#262626" stroke-width="1.5"/></svg>
<svg class="s" style="left:673px;top:827px;" width="22" height="20" viewBox="0 0 22 20"><circle cx="14" cy="8" r="6.5" fill="#555" stroke="#b0b0b0" stroke-width="1.4"/><path d="M8.5 5 A6.5 6.5 0 1 0 16 14" stroke="#b0b0b0" stroke-width="1.4" fill="none"/><path d="M5.5 8 A6.5 6.5 0 1 0 13 17" stroke="#b0b0b0" stroke-width="1.4" fill="none"/></svg>
<svg class="s" style="left:720px;top:826px;" width="25" height="22" viewBox="0 0 25 22"><rect x="1" y="3" width="22" height="18" fill="none" stroke="#b0b0b0" stroke-width="1.6"/><path d="M5 6 C12 6 11 17 19 17" stroke="#b0b0b0" stroke-width="1.6" fill="none"/><path d="M8 0 V3 M13 0 V3 M18 0 V3" stroke="#b0b0b0" stroke-width="1"/></svg>
<div class="r" style="left:1px;top:862px;width:766px;height:1.5px;background:#1b1b1b;"></div>
<div class="r" style="left:1px;top:863px;width:766px;height:28px;background:#262626;"></div>
<svg class="s" style="left:11px;top:873px;" width="16" height="10" viewBox="0 0 16 10"><path d="M0.5 5 C4 0 12 0 15.5 5 C12 10 4 10 0.5 5Z" fill="#b0b0b0"/><circle cx="8" cy="5" r="2.6" fill="#262626"/><circle cx="8" cy="5" r="1.2" fill="#b0b0b0"/></svg>
<svg class="s" style="left:31px;top:870px;" width="18" height="16" viewBox="0 0 18 16"><path d="M0 5 H4 L9 1 V15 L4 11 H0Z" fill="#b0b0b0"/><path d="M11.5 4.5 A5 5 0 0 1 11.5 11.5 M13.5 2 A8 8 0 0 1 13.5 14" stroke="#b0b0b0" stroke-width="1.5" fill="none"/></svg>
<svg class="s" style="left:56px;top:873px;" width="10" height="10" viewBox="0 0 10 10"><circle cx="5" cy="5" r="5" fill="#b0b0b0"/></svg>
<svg class="s" style="left:76px;top:869px;" width="13" height="15" viewBox="0 0 13 15"><path d="M3 7 V4.5 A3.5 3.5 0 0 1 10 4.5 V7" stroke="#b0b0b0" stroke-width="1.8" fill="none"/><rect x="0.5" y="7" width="12" height="8" fill="#b0b0b0"/><rect x="5.5" y="9.5" width="2" height="3" fill="#262626"/></svg>
<div class="r" style="left:100px;top:869px;width:1px;height:16px;background:#141414;"></div>
<div class="r" style="left:145px;top:869px;width:1px;height:16px;background:#141414;"></div>
<div class="r" style="left:193px;top:869px;width:1px;height:16px;background:#141414;"></div>
<div class="r" style="left:380px;top:869px;width:1.5px;height:16px;background:#141414;"></div>
<div class="r" style="left:576px;top:869px;width:1.5px;height:16px;background:#141414;"></div>
<div class="r" style="left:744px;top:869px;width:1.5px;height:16px;background:#141414;"></div>
<svg class="s" style="left:120px;top:869px;" width="17" height="17" viewBox="0 0 17 17"><path d="M1 1 H8 L16 9 L9 16 L1 8Z" fill="#b0b0b0"/><circle cx="4.5" cy="4.5" r="1.5" fill="#262626"/></svg>
<div class="t " style="left:154px;top:870.6px;font-size:13.5px;line-height:13.5px;color:#a9a9a9;font-weight:normal;">#</div>
<div class="t " style="left:201px;top:870.6px;font-size:14px;line-height:14px;color:#a9a9a9;font-weight:normal;">Source Name</div>
<svg class="s" style="left:386px;top:871px;" width="18" height="14" viewBox="0 0 18 14"><path d="M3 8 A6 6 0 0 1 15 8Z" fill="#b0b0b0"/><rect x="7.5" y="6" width="3" height="8" fill="#b0b0b0"/><path d="M0 10 H5 M13 10 H18" stroke="#b0b0b0" stroke-width="1.4"/><circle cx="6.5" cy="5" r="1.2" fill="#262626"/><circle cx="11.5" cy="5" r="1.2" fill="#262626"/></svg>
<svg class="s" style="left:410px;top:871px;" width="14" height="14" viewBox="0 0 14 14"><circle cx="7" cy="7" r="3" fill="none" stroke="#b0b0b0" stroke-width="1.4"/><path d="M7 0 V3 M7 11 V14 M0 7 H3 M11 7 H14 M2 2 L4 4 M10 10 L12 12 M12 2 L10 4 M2 12 L4 10" stroke="#b0b0b0" stroke-width="1.2"/></svg>
<svg class="s" style="left:430px;top:870px;" width="16" height="16" viewBox="0 0 16 16"><path d="M1 1 L15 15" stroke="#b0b0b0" stroke-width="1.6" stroke-dasharray="2 1.5"/></svg>
<div class="t " style="left:452px;top:869.6px;font-size:17px;line-height:17px;color:#b0b0b0;font-weight:normal;font-family:"Liberation Serif",serif;"><i>fx</i></div>
<svg class="s" style="left:472px;top:870px;" width="18" height="17" viewBox="0 0 18 17"><rect x="3" y="0.5" width="14" height="13" fill="#b0b0b0"/><path d="M1 3 V16 H15" stroke="#b0b0b0" stroke-width="1.4" fill="none"/><rect x="6" y="3" width="8" height="7" fill="#808080"/><path d="M7.5 6.5 H12.5" stroke="#262626" stroke-width="1.4"/></svg>
<svg class="s" style="left:495px;top:869px;" width="18" height="18" viewBox="0 0 18 18"><circle cx="11" cy="7" r="6" fill="#666" stroke="#b0b0b0" stroke-width="1.3"/><path d="M5.5 5 A6 6 0 1 0 13 13" stroke="#b0b0b0" stroke-width="1.3" fill="none"/><path d="M3 8 A6 6 0 1 0 10.5 16" stroke="#b0b0b0" stroke-width="1.3" fill="none"/></svg>
<svg class="s" style="left:517px;top:871px;" width="15" height="15" viewBox="0 0 15 15"><circle cx="7.5" cy="7.5" r="6.5" fill="none" stroke="#b0b0b0" stroke-width="1.5"/><path d="M12 3 A6.5 6.5 0 0 1 3 12Z" fill="#b0b0b0"/></svg>
<svg class="s" style="left:539px;top:871px;" width="14" height="14" viewBox="0 0 14 14"><path d="M7 1 L13 4 V10 L7 13 L1 10 V4Z M1 4 L7 7 L13 4 M7 7 V13" stroke="#b0b0b0" stroke-width="1.4" fill="none"/></svg>
<div class="t " style="left:584.7px;top:870.8px;font-size:14.2px;line-height:14.2px;color:#a9a9a9;font-weight:normal;">Parent &amp; Link</div>
<div class="r" style="left:1px;top:891px;width:766px;height:1px;background:#1e1e1e;"></div>
<div class="r" style="left:3px;top:892px;width:764px;height:22px;background:#3e3e3e;"></div>
<div class="r" style="left:9px;top:894px;width:18px;height:18px;background:#333333;"></div>
<svg class="s" style="left:11px;top:898px;" width="16" height="10" viewBox="0 0 16 10"><path d="M0.5 5 C4 0 12 0 15.5 5 C12 10 4 10 0.5 5Z" fill="#b8b8b8"/><circle cx="8" cy="5" r="2.6" fill="#333"/><circle cx="8" cy="5" r="1.2" fill="#b8b8b8"/></svg>
<div class="r" style="left:52px;top:894px;width:18px;height:18px;background:#333333;"></div>
<div class="r" style="left:73px;top:894px;width:18px;height:18px;background:#333333;"></div>
<svg class="s" style="left:109px;top:900px;" width="11" height="7" viewBox="0 0 11 7"><path d="M1 1 L5.5 5.5 L10 1" stroke="#c0c0c0" stroke-width="1.5" fill="none"/></svg>
<div class="r" style="left:125px;top:895px;width:17px;height:16.5px;background:#a9a8d4;"></div>
<div class="t " style="left:156px;top:895.3px;font-size:15px;line-height:15px;color:#c8c8c8;font-weight:normal;">1</div>
<svg class="s" style="left:200px;top:894px;" width="14" height="18" viewBox="0 0 14 18"><path d="M1 0.5 H9 L13 4.5 V17.5 H1Z" fill="#e8e8e8"/><rect x="3" y="7" width="9" height="5" fill="#4a7ec8"/><rect x="3.5" y="13" width="7" height="2.5" fill="#a0a0a0"/></svg>
<div class="r" style="left:220px;top:892.6px;width:158px;height:21.4px;background:#3e3e3e;border:2px solid #9a9a9a;box-sizing:border-box;"></div>
<div class="t " style="left:224px;top:895.4px;font-size:15.5px;line-height:15.5px;color:#c8c8c8;font-weight:normal;">fish.png</div>
<div class="r" style="left:386.7px;top:893.4px;width:18px;height:18px;background:#333333;"></div>
<svg class="s" style="left:387px;top:897px;" width="18" height="13" viewBox="0 0 18 13"><path d="M3 8 A6 6 0 0 1 15 8Z" fill="#b8b8b8"/><rect x="7.5" y="6" width="3" height="7" fill="#b8b8b8"/><path d="M0 10 H5 M13 10 H18" stroke="#b8b8b8" stroke-width="1.4"/><circle cx="6.5" cy="5" r="1.2" fill="#333"/><circle cx="11.5" cy="5" r="1.2" fill="#333"/></svg>
<div class="r" style="left:429.8px;top:893.4px;width:18px;height:18px;background:#333333;"></div>
<svg class="s" style="left:430px;top:894px;" width="18" height="18" viewBox="0 0 18 18"><path d="M2 16 L16 2" stroke="#b8b8b8" stroke-width="1.6"/></svg>
<div class="r" style="left:451px;top:893.4px;width:18px;height:18px;background:#333333;"></div>
<div class="t " style="left:452px;top:894.6px;font-size:17px;line-height:17px;color:#b8b8b8;font-weight:normal;font-family:"Liberation Serif",serif;"><i>fx</i></div>
<div class="r" style="left:494.3px;top:893.4px;width:18.4px;height:18px;background:#363636;"></div>
<div class="r" style="left:515.6px;top:893.4px;width:18.4px;height:18px;background:#363636;"></div>
<div class="r" style="left:536.9px;top:893.4px;width:18.4px;height:18px;background:#363636;"></div>
<svg class="s" style="left:584px;top:896px;" width="18" height="16" viewBox="0 0 18 16"><path d="M9.97 7.35 L10.17 7.47 L10.35 7.64 L10.51 7.85 L10.62 8.09 L10.68 8.37 L10.68 8.67 L10.62 8.98 L10.49 9.28 L10.29 9.58 L10.02 9.84 L9.69 10.07 L9.31 10.25 L8.88 10.36 L8.42 10.40 L7.94 10.36 L7.46 10.24 L6.99 10.03 L6.56 9.74 L6.18 9.38 L5.86 8.94 L5.63 8.44 L5.49 7.90 L5.46 7.33 L5.54 6.74 L5.74 6.16 L6.05 5.61 L6.48 5.10 L7.01 4.66 L7.62 4.31 L8.32 4.05 L9.07 3.90 L9.85 3.88 L10.65 3.99 L11.43 4.22 L12.17 4.59 L12.84 5.08 L13.42 5.68 L13.88 6.38 L14.22 7.16 L14.40 8.00 L14.42 8.87 L14.28 9.75 L13.96 10.61 L13.48 11.41 L12.85 12.14 L12.07 12.78 L11.17 13.28 L10.17 13.64 L9.10 13.84 L7.99 13.86 L6.88 13.71 L5.79 13.37 L4.77 12.86 L3.85 12.18 L3.05 11.35 L2.42 10.40 L1.96 9.34 L1.71 8.21 L1.68 7.04 L1.87 5.87" stroke="#b8b8b8" stroke-width="1.4" fill="none"/></svg>
<div class="r" style="left:610.6px;top:892.5px;width:127.4px;height:21.5px;background:#1e1e1e;"></div>
<div class="t " style="left:619px;top:895.6px;font-size:15.5px;line-height:15.5px;color:#c8c8c8;font-weight:normal;">None</div>
<svg class="s" style="left:719px;top:899px;" width="12" height="8" viewBox="0 0 12 8"><path d="M1 1 L6 6 L11 1" stroke="#c8c8c8" stroke-width="1.6" fill="none"/></svg>
<div class="r" style="left:3px;top:914px;width:764px;height:1px;background:#1c1c1c;"></div>
<div class="r" style="left:3px;top:915.2px;width:764px;height:24.4px;background:#262626;"></div>
<div class="r" style="left:3px;top:938.8px;width:764px;height:1.5px;background:#1d1d1d;"></div>
<div class="r" style="left:3px;top:939.6px;width:764px;height:24.4px;background:#262626;"></div>
<div class="r" style="left:3px;top:963.2px;width:764px;height:1.5px;background:#1d1d1d;"></div>
<div class="r" style="left:3px;top:964.1px;width:764px;height:24.4px;background:#262626;"></div>
<div class="r" style="left:3px;top:987.7px;width:764px;height:1.5px;background:#1d1d1d;"></div>
<div class="r" style="left:3px;top:988.5px;width:764px;height:24.4px;background:#262626;"></div>
<div class="r" style="left:3px;top:1012.1px;width:764px;height:1.5px;background:#1d1d1d;"></div>
<div class="r" style="left:3px;top:1012.9px;width:764px;height:24.4px;background:#262626;"></div>
<div class="r" style="left:3px;top:1036.5px;width:764px;height:1.5px;background:#1d1d1d;"></div>
<div class="r" style="left:3px;top:1037.4px;width:764px;height:24.4px;background:#262626;"></div>
<div class="r" style="left:3px;top:1061.0px;width:764px;height:1.5px;background:#1d1d1d;"></div>
<div class="r" style="left:3px;top:1061.8px;width:764px;height:24.4px;background:#262626;"></div>
<div class="r" style="left:3px;top:1085.4px;width:764px;height:1.5px;background:#1d1d1d;"></div>
<div class="r" style="left:3px;top:1086.2px;width:764px;height:24.4px;background:#262626;"></div>
<div class="r" style="left:3px;top:1109.8px;width:764px;height:1.5px;background:#1d1d1d;"></div>
<div class="r" style="left:3px;top:1110.6px;width:764px;height:24.4px;background:#262626;"></div>
<div class="r" style="left:3px;top:1134.2px;width:764px;height:1.5px;background:#1d1d1d;"></div>
<div class="r" style="left:3px;top:1135.1px;width:764px;height:24.4px;background:#262626;"></div>
<div class="r" style="left:3px;top:1158.7px;width:764px;height:1.5px;background:#1d1d1d;"></div>
<div class="r" style="left:3px;top:1159.5px;width:764px;height:24.4px;background:#262626;"></div>
<div class="r" style="left:3px;top:1183.1px;width:764px;height:1.5px;background:#1d1d1d;"></div>
<div class="r" style="left:3px;top:1183.9px;width:764px;height:24.4px;background:#262626;"></div>
<div class="r" style="left:3px;top:1207.5px;width:764px;height:1.5px;background:#1d1d1d;"></div>
<svg class="s" style="left:134px;top:926px;" width="10" height="7" viewBox="0 0 10 7"><path d="M1 1 L5 5 L9 1" stroke="#c0c0c0" stroke-width="1.5" fill="none"/></svg>
<div class="t " style="left:155.6px;top:921.3px;font-size:15.5px;line-height:15.5px;color:#a9a9a9;font-weight:normal;">Effects</div>
<div class="r" style="left:9px;top:941px;width:18px;height:19px;background:#1c1c1c;"></div>
<div class="t " style="left:10px;top:940.8px;font-size:18px;line-height:18px;color:#a8a8a8;font-weight:normal;font-family:"Liberation Serif",serif;"><i>fx</i></div>
<svg class="s" style="left:158px;top:949px;" width="10" height="7" viewBox="0 0 10 7"><path d="M1 1 L5 5 L9 1" stroke="#c0c0c0" stroke-width="1.5" fill="none"/></svg>
<div class="r" style="left:175px;top:941px;width:205px;height:22px;background:#4a4a4a;"></div>
<div class="t " style="left:180px;top:944.9px;font-size:15.5px;line-height:15.5px;color:#c8c8c8;font-weight:normal;">Puppet</div>
<div class="t " style="left:387px;top:944.7px;font-size:15.5px;line-height:15.5px;color:#2f9bf0;font-weight:normal;">Reset</div>
<div class="t " style="left:204px;top:969.3px;font-size:15.5px;line-height:15.5px;color:#a9a9a9;font-weight:normal;">Puppet Engine</div>
<div class="r" style="left:386.7px;top:965.2px;width:182.8px;height:22.2px;background:#1b1b1b;border:1px solid #2e2e2e;box-sizing:border-box;"></div>
<div class="t " style="left:396px;top:968.8px;font-size:15.5px;line-height:15.5px;color:#c8c8c8;font-weight:normal;">Advanced</div>
<svg class="s" style="left:550.6px;top:973px;" width="12" height="8" viewBox="0 0 12 8"><path d="M1 1 L6 6 L11 1" stroke="#c8c8c8" stroke-width="1.6" fill="none"/></svg>
<svg class="s" style="left:602px;top:967.5px;" width="18" height="16" viewBox="0 0 18 16"><path d="M9.97 7.35 L10.17 7.47 L10.35 7.64 L10.51 7.85 L10.62 8.09 L10.68 8.37 L10.68 8.67 L10.62 8.98 L10.49 9.28 L10.29 9.58 L10.02 9.84 L9.69 10.07 L9.31 10.25 L8.88 10.36 L8.42 10.40 L7.94 10.36 L7.46 10.24 L6.99 10.03 L6.56 9.74 L6.18 9.38 L5.86 8.94 L5.63 8.44 L5.49 7.90 L5.46 7.33 L5.54 6.74 L5.74 6.16 L6.05 5.61 L6.48 5.10 L7.01 4.66 L7.62 4.31 L8.32 4.05 L9.07 3.90 L9.85 3.88 L10.65 3.99 L11.43 4.22 L12.17 4.59 L12.84 5.08 L13.42 5.68 L13.88 6.38 L14.22 7.16 L14.40 8.00 L14.42 8.87 L14.28 9.75 L13.96 10.61 L13.48 11.41 L12.85 12.14 L12.07 12.78 L11.17 13.28 L10.17 13.64 L9.10 13.84 L7.99 13.86 L6.88 13.71 L5.79 13.37 L4.77 12.86 L3.85 12.18 L3.05 11.35 L2.42 10.40 L1.96 9.34 L1.71 8.21 L1.68 7.04 L1.87 5.87" stroke="#b4b4b4" stroke-width="1.4" fill="none"/></svg>
<svg class="s" style="left:602px;top:992px;" width="18" height="16" viewBox="0 0 18 16"><path d="M9.97 7.35 L10.17 7.47 L10.35 7.64 L10.51 7.85 L10.62 8.09 L10.68 8.37 L10.68 8.67 L10.62 8.98 L10.49 9.28 L10.29 9.58 L10.02 9.84 L9.69 10.07 L9.31 10.25 L8.88 10.36 L8.42 10.40 L7.94 10.36 L7.46 10.24 L6.99 10.03 L6.56 9.74 L6.18 9.38 L5.86 8.94 L5.63 8.44 L5.49 7.90 L5.46 7.33 L5.54 6.74 L5.74 6.16 L6.05 5.61 L6.48 5.10 L7.01 4.66 L7.62 4.31 L8.32 4.05 L9.07 3.90 L9.85 3.88 L10.65 3.99 L11.43 4.22 L12.17 4.59 L12.84 5.08 L13.42 5.68 L13.88 6.38 L14.22 7.16 L14.40 8.00 L14.42 8.87 L14.28 9.75 L13.96 10.61 L13.48 11.41 L12.85 12.14 L12.07 12.78 L11.17 13.28 L10.17 13.64 L9.10 13.84 L7.99 13.86 L6.88 13.71 L5.79 13.37 L4.77 12.86 L3.85 12.18 L3.05 11.35 L2.42 10.40 L1.96 9.34 L1.71 8.21 L1.68 7.04 L1.87 5.87" stroke="#b4b4b4" stroke-width="1.4" fill="none"/></svg>
<svg class="s" style="left:602px;top:1016.5px;" width="18" height="16" viewBox="0 0 18 16"><path d="M9.97 7.35 L10.17 7.47 L10.35 7.64 L10.51 7.85 L10.62 8.09 L10.68 8.37 L10.68 8.67 L10.62 8.98 L10.49 9.28 L10.29 9.58 L10.02 9.84 L9.69 10.07 L9.31 10.25 L8.88 10.36 L8.42 10.40 L7.94 10.36 L7.46 10.24 L6.99 10.03 L6.56 9.74 L6.18 9.38 L5.86 8.94 L5.63 8.44 L5.49 7.90 L5.46 7.33 L5.54 6.74 L5.74 6.16 L6.05 5.61 L6.48 5.10 L7.01 4.66 L7.62 4.31 L8.32 4.05 L9.07 3.90 L9.85 3.88 L10.65 3.99 L11.43 4.22 L12.17 4.59 L12.84 5.08 L13.42 5.68 L13.88 6.38 L14.22 7.16 L14.40 8.00 L14.42 8.87 L14.28 9.75 L13.96 10.61 L13.48 11.41 L12.85 12.14 L12.07 12.78 L11.17 13.28 L10.17 13.64 L9.10 13.84 L7.99 13.86 L6.88 13.71 L5.79 13.37 L4.77 12.86 L3.85 12.18 L3.05 11.35 L2.42 10.40 L1.96 9.34 L1.71 8.21 L1.68 7.04 L1.87 5.87" stroke="#b4b4b4" stroke-width="1.4" fill="none"/></svg>
<svg class="s" style="left:602px;top:1041px;" width="18" height="16" viewBox="0 0 18 16"><path d="M9.97 7.35 L10.17 7.47 L10.35 7.64 L10.51 7.85 L10.62 8.09 L10.68 8.37 L10.68 8.67 L10.62 8.98 L10.49 9.28 L10.29 9.58 L10.02 9.84 L9.69 10.07 L9.31 10.25 L8.88 10.36 L8.42 10.40 L7.94 10.36 L7.46 10.24 L6.99 10.03 L6.56 9.74 L6.18 9.38 L5.86 8.94 L5.63 8.44 L5.49 7.90 L5.46 7.33 L5.54 6.74 L5.74 6.16 L6.05 5.61 L6.48 5.10 L7.01 4.66 L7.62 4.31 L8.32 4.05 L9.07 3.90 L9.85 3.88 L10.65 3.99 L11.43 4.22 L12.17 4.59 L12.84 5.08 L13.42 5.68 L13.88 6.38 L14.22 7.16 L14.40 8.00 L14.42 8.87 L14.28 9.75 L13.96 10.61 L13.48 11.41 L12.85 12.14 L12.07 12.78 L11.17 13.28 L10.17 13.64 L9.10 13.84 L7.99 13.86 L6.88 13.71 L5.79 13.37 L4.77 12.86 L3.85 12.18 L3.05 11.35 L2.42 10.40 L1.96 9.34 L1.71 8.21 L1.68 7.04 L1.87 5.87" stroke="#b4b4b4" stroke-width="1.4" fill="none"/></svg>
<svg class="s" style="left:602px;top:1139.5px;" width="18" height="16" viewBox="0 0 18 16"><path d="M9.97 7.35 L10.17 7.47 L10.35 7.64 L10.51 7.85 L10.62 8.09 L10.68 8.37 L10.68 8.67 L10.62 8.98 L10.49 9.28 L10.29 9.58 L10.02 9.84 L9.69 10.07 L9.31 10.25 L8.88 10.36 L8.42 10.40 L7.94 10.36 L7.46 10.24 L6.99 10.03 L6.56 9.74 L6.18 9.38 L5.86 8.94 L5.63 8.44 L5.49 7.90 L5.46 7.33 L5.54 6.74 L5.74 6.16 L6.05 5.61 L6.48 5.10 L7.01 4.66 L7.62 4.31 L8.32 4.05 L9.07 3.90 L9.85 3.88 L10.65 3.99 L11.43 4.22 L12.17 4.59 L12.84 5.08 L13.42 5.68 L13.88 6.38 L14.22 7.16 L14.40 8.00 L14.42 8.87 L14.28 9.75 L13.96 10.61 L13.48 11.41 L12.85 12.14 L12.07 12.78 L11.17 13.28 L10.17 13.64 L9.10 13.84 L7.99 13.86 L6.88 13.71 L5.79 13.37 L4.77 12.86 L3.85 12.18 L3.05 11.35 L2.42 10.40 L1.96 9.34 L1.71 8.21 L1.68 7.04 L1.87 5.87" stroke="#b4b4b4" stroke-width="1.4" fill="none"/></svg>
<svg class="s" style="left:602px;top:1164px;" width="18" height="16" viewBox="0 0 18 16"><path d="M9.97 7.35 L10.17 7.47 L10.35 7.64 L10.51 7.85 L10.62 8.09 L10.68 8.37 L10.68 8.67 L10.62 8.98 L10.49 9.28 L10.29 9.58 L10.02 9.84 L9.69 10.07 L9.31 10.25 L8.88 10.36 L8.42 10.40 L7.94 10.36 L7.46 10.24 L6.99 10.03 L6.56 9.74 L6.18 9.38 L5.86 8.94 L5.63 8.44 L5.49 7.90 L5.46 7.33 L5.54 6.74 L5.74 6.16 L6.05 5.61 L6.48 5.10 L7.01 4.66 L7.62 4.31 L8.32 4.05 L9.07 3.90 L9.85 3.88 L10.65 3.99 L11.43 4.22 L12.17 4.59 L12.84 5.08 L13.42 5.68 L13.88 6.38 L14.22 7.16 L14.40 8.00 L14.42 8.87 L14.28 9.75 L13.96 10.61 L13.48 11.41 L12.85 12.14 L12.07 12.78 L11.17 13.28 L10.17 13.64 L9.10 13.84 L7.99 13.86 L6.88 13.71 L5.79 13.37 L4.77 12.86 L3.85 12.18 L3.05 11.35 L2.42 10.40 L1.96 9.34 L1.71 8.21 L1.68 7.04 L1.87 5.87" stroke="#b4b4b4" stroke-width="1.4" fill="none"/></svg>
<svg class="s" style="left:602px;top:1188.5px;" width="18" height="16" viewBox="0 0 18 16"><path d="M9.97 7.35 L10.17 7.47 L10.35 7.64 L10.51 7.85 L10.62 8.09 L10.68 8.37 L10.68 8.67 L10.62 8.98 L10.49 9.28 L10.29 9.58 L10.02 9.84 L9.69 10.07 L9.31 10.25 L8.88 10.36 L8.42 10.40 L7.94 10.36 L7.46 10.24 L6.99 10.03 L6.56 9.74 L6.18 9.38 L5.86 8.94 L5.63 8.44 L5.49 7.90 L5.46 7.33 L5.54 6.74 L5.74 6.16 L6.05 5.61 L6.48 5.10 L7.01 4.66 L7.62 4.31 L8.32 4.05 L9.07 3.90 L9.85 3.88 L10.65 3.99 L11.43 4.22 L12.17 4.59 L12.84 5.08 L13.42 5.68 L13.88 6.38 L14.22 7.16 L14.40 8.00 L14.42 8.87 L14.28 9.75 L13.96 10.61 L13.48 11.41 L12.85 12.14 L12.07 12.78 L11.17 13.28 L10.17 13.64 L9.10 13.84 L7.99 13.86 L6.88 13.71 L5.79 13.37 L4.77 12.86 L3.85 12.18 L3.05 11.35 L2.42 10.40 L1.96 9.34 L1.71 8.21 L1.68 7.04 L1.87 5.87" stroke="#b4b4b4" stroke-width="1.4" fill="none"/></svg>
<svg class="s" style="left:201px;top:991px;" width="17" height="18" viewBox="0 0 17 18"><circle cx="8.5" cy="10" r="7" stroke="#b0b0b0" stroke-width="1.6" fill="none"/><path d="M6 1 H11 M8.5 1 V3" stroke="#b0b0b0" stroke-width="1.5"/></svg>
<div class="t " style="left:227px;top:994.5px;font-size:15.5px;line-height:15.5px;color:#a9a9a9;font-weight:normal;">Mesh Ro...efinement</div>
<div class="t " style="left:387.8px;top:993.5px;font-size:15.5px;line-height:15.5px;color:#2f9bf0;font-weight:normal;">20</div>
<div class="t " style="left:204px;top:1018.9px;font-size:15.5px;line-height:15.5px;color:#a9a9a9;font-weight:normal;">On Transparent</div>
<div class="t " style="left:387.8px;top:1017.4px;font-size:15.5px;line-height:15.5px;color:#2f9bf0;font-weight:normal;">Off</div>
<div class="t " style="left:204px;top:1043.4px;font-size:15.5px;line-height:15.5px;color:#a9a9a9;font-weight:normal;">Auto-traced Shapes</div>
<svg class="s" style="left:181px;top:1068px;" width="7" height="11" viewBox="0 0 7 11"><path d="M1 1 L5.5 5.5 L1 10" stroke="#c0c0c0" stroke-width="1.5" fill="none"/></svg>
<div class="r" style="left:199.8px;top:1063px;width:180.6px;height:22.4px;background:#4a4a4a;"></div>
<div class="t " style="left:204px;top:1069.3px;font-size:15.5px;line-height:15.5px;color:#c8c8c8;font-weight:normal;">Mesh 1</div>
<svg class="s" style="left:181px;top:1093px;" width="7" height="11" viewBox="0 0 7 11"><path d="M1 1 L5.5 5.5 L1 10" stroke="#c0c0c0" stroke-width="1.5" fill="none"/></svg>
<div class="t " style="left:204px;top:1093.5px;font-size:15.5px;line-height:15.5px;color:#a9a9a9;font-weight:normal;">Compositing Options</div>
<svg class="s" style="left:389px;top:1092px;" width="35" height="13" viewBox="0 0 35 13"><path d="M1 6.5 H14 M7.5 0 V13 M19 6.5 H34" stroke="#c8c8c8" stroke-width="2.4"/></svg>
<svg class="s" style="left:133px;top:1119px;" width="10" height="7" viewBox="0 0 10 7"><path d="M1 1 L5 5 L9 1" stroke="#c0c0c0" stroke-width="1.5" fill="none"/></svg>
<div class="t " style="left:155.3px;top:1117.3px;font-size:15.5px;line-height:15.5px;color:#a9a9a9;font-weight:normal;">Transform</div>
<div class="t " style="left:386.3px;top:1117.3px;font-size:15.5px;line-height:15.5px;color:#2f9bf0;font-weight:normal;">Reset</div>
<svg class="s" style="left:176px;top:1138px;" width="17" height="18" viewBox="0 0 17 18"><circle cx="8.5" cy="10" r="7" stroke="#b0b0b0" stroke-width="1.6" fill="none"/><path d="M6 1 H11 M8.5 1 V3" stroke="#b0b0b0" stroke-width="1.5"/></svg>
<div class="t " style="left:203px;top:1142.3px;font-size:15.5px;line-height:15.5px;color:#a9a9a9;font-weight:normal;">Anchor Point</div>
<div class="t " style="left:387.4px;top:1141.9px;font-size:15.5px;line-height:15.5px;color:#2f9bf0;font-weight:normal;">1604,0,1092,5</div>
<svg class="s" style="left:13px;top:1165px;" width="53" height="12" viewBox="0 0 53 12"><path d="M8 0.5 V11.5 L0.5 6Z" fill="#c0c0c0"/><path d="M26.5 1 L31.5 6 L26.5 11 L21.5 6Z" stroke="#c0c0c0" stroke-width="1.3" fill="none"/><path d="M45 0.5 V11.5 L52.5 6Z" fill="#c0c0c0"/></svg>
<svg class="s" style="left:13px;top:1189px;" width="53" height="12" viewBox="0 0 53 12"><path d="M8 0.5 V11.5 L0.5 6Z" fill="#c0c0c0"/><path d="M26.5 1 L31.5 6 L26.5 11 L21.5 6Z" stroke="#c0c0c0" stroke-width="1.3" fill="none"/><path d="M45 0.5 V11.5 L52.5 6Z" fill="#c0c0c0"/></svg>
<svg class="s" style="left:176px;top:1162px;" width="17" height="18" viewBox="0 0 17 18"><circle cx="8.5" cy="10" r="7" stroke="#2f8ff0" stroke-width="1.6" fill="none"/><path d="M6 1 H11 M8.5 1 V3 M8.5 10 L12 6" stroke="#2f8ff0" stroke-width="1.5"/></svg>
<svg class="s" style="left:202px;top:1164px;" width="16" height="15" viewBox="0 0 16 15"><path d="M1 0 V14 H16 M3 11 L6 4 L9 9 L15 6" stroke="#b0b0b0" stroke-width="1.4" fill="none"/></svg>
<div class="t " style="left:230.2px;top:1165.7px;font-size:15.5px;line-height:15.5px;color:#a9a9a9;font-weight:normal;">Position</div>
<div class="t " style="left:387.4px;top:1165.4px;font-size:15.5px;line-height:15.5px;color:#2f9bf0;font-weight:normal;">908,5,706,3</div>
<svg class="s" style="left:176px;top:1187px;" width="17" height="18" viewBox="0 0 17 18"><circle cx="8.5" cy="10" r="7" stroke="#2f8ff0" stroke-width="1.6" fill="none"/><path d="M6 1 H11 M8.5 1 V3 M8.5 10 L12 6" stroke="#2f8ff0" stroke-width="1.5"/></svg>
<svg class="s" style="left:202px;top:1188px;" width="16" height="15" viewBox="0 0 16 15"><path d="M1 0 V14 H16 M3 11 L6 4 L9 9 L15 6" stroke="#b0b0b0" stroke-width="1.4" fill="none"/></svg>
<div class="t " style="left:230.2px;top:1189.9px;font-size:15.5px;line-height:15.5px;color:#a9a9a9;font-weight:normal;">Scale</div>
<div class="r" style="left:386px;top:1190px;width:18px;height:14px;background:#1c1c1c;"></div>
<svg class="s" style="left:387px;top:1192px;" width="17" height="10" viewBox="0 0 17 10"><rect x="1" y="2" width="8" height="6" rx="3" stroke="#b8b8b8" stroke-width="1.6" fill="none"/><rect x="8" y="2" width="8" height="6" rx="3" stroke="#b8b8b8" stroke-width="1.6" fill="none"/></svg>
<div class="t " style="left:412.8px;top:1189.9px;font-size:15.5px;line-height:15.5px;color:#2f9bf0;font-weight:normal;">17,1,17,1%</div>
<div class="r" style="left:1px;top:1201px;width:766px;height:27px;background:#232323;"></div>
<div class="r" style="left:1px;top:1200px;width:766px;height:1px;background:#161616;"></div>
<svg class="s" style="left:12px;top:1204px;" width="18" height="19" viewBox="0 0 18 19"><rect x="0.5" y="0.5" width="12" height="12" fill="none" stroke="#2f8ff0" stroke-width="1.5"/><rect x="5" y="5" width="12" height="12" fill="#1a3f6a" stroke="#2f8ff0" stroke-width="1.5"/><rect x="8" y="8" width="6" height="6" fill="#2f8ff0"/></svg>
<svg class="s" style="left:41px;top:1205px;" width="16" height="17" viewBox="0 0 16 17"><rect x="0.5" y="0.5" width="10" height="10" fill="none" stroke="#b0b0b0" stroke-width="1.5"/><rect x="5" y="5" width="10" height="10" fill="#232323" stroke="#b0b0b0" stroke-width="1.5"/></svg>
<svg class="s" style="left:67px;top:1204px;" width="18" height="19" viewBox="0 0 18 19"><path d="M5 1 C2 1 2 2 2 5 V8 L0.5 9.5 L2 11 V14 C2 17 2 18 5 18 M13 1 C16 1 16 2 16 5 V8 L17.5 9.5 L16 11 V14 C16 17 16 18 13 18 M9 2 V17" stroke="#b0b0b0" stroke-width="1.6" fill="none"/></svg>
<svg class="s" style="left:94px;top:1205px;" width="20" height="17" viewBox="0 0 20 17"><circle cx="8" cy="6" r="4" fill="#b0b0b0"/><path d="M1 16 C1 10 15 10 15 16Z" fill="#b0b0b0"/><path d="M14 4 L19 1 M15 8 L20 7" stroke="#b0b0b0" stroke-width="1.4"/></svg>
<div class="t " style="left:152.2px;top:1205.9px;font-size:15.5px;line-height:15.5px;color:#a9a9a9;font-weight:normal;">Frame Render Time</div>
<div class="t " style="left:297.3px;top:1206.3px;font-size:15px;line-height:15px;color:#5a5a5a;font-weight:normal;">0ms</div>
<div class="r" style="left:384.3px;top:1203.4px;width:189.2px;height:19.5px;background:#1c1c1c;border-radius:2px;"></div>
<div class="t " style="left:392px;top:1205.9px;font-size:15.5px;line-height:15.5px;color:#a9a9a9;font-weight:normal;">Toggle Switches / Modes</div>
<div class="r" style="left:767px;top:862px;width:1.8px;height:366px;background:#0c0c0c;"></div>
<div class="r" style="left:769px;top:772px;width:1230px;height:456px;background:#262626;"></div>
<div class="r" style="left:777px;top:820px;width:1187px;height:14.5px;background:#0e0e0e;"></div>
<div class="r" style="left:777.6px;top:821.2px;width:1186px;height:11.8px;background:#6b6b6b;"></div>
<svg class="s" style="left:768px;top:821px;" width="10" height="12" viewBox="0 0 10 12"><path d="M10 0 V12 H6 A6 6 0 0 1 6 0Z" fill="#2f8ff0"/></svg>
<svg class="s" style="left:1963.6px;top:821px;" width="10" height="12" viewBox="0 0 10 12"><path d="M0 0 V12 H4 A6 6 0 0 0 4 0Z" fill="#2f8ff0"/></svg>
<div class="r" style="left:1073px;top:822px;width:1.5px;height:10px;background:#9ab8d8;"></div>
<div class="r" style="left:769px;top:835px;width:1206px;height:27px;background:#262626;"></div>
<div class="r" style="left:768px;top:835px;width:40px;height:20px;overflow:hidden;"><div class="t" style="left:-4px;top:2.7px;font-size:14.5px;line-height:14.5px;color:#b8b8b8;">0:00s</div></div>
<div class="r" style="left:779px;top:851px;width:1.3px;height:10.5px;background:#a8a8a8;"></div>
<div class="t " style="left:854.8500000000001px;top:837.7px;font-size:14.5px;line-height:14.5px;color:#b8b8b8;font-weight:normal;">01s</div>
<div class="r" style="left:865.0500000000001px;top:854.8px;width:1.3px;height:6.4px;background:#a8a8a8;"></div>
<div class="t " style="left:941.3000000000001px;top:837.7px;font-size:14.5px;line-height:14.5px;color:#b8b8b8;font-weight:normal;">02s</div>
<div class="r" style="left:951.5px;top:854.8px;width:1.3px;height:6.4px;background:#a8a8a8;"></div>
<div class="t " style="left:1027.7500000000002px;top:837.7px;font-size:14.5px;line-height:14.5px;color:#b8b8b8;font-weight:normal;">03s</div>
<div class="r" style="left:1037.9500000000003px;top:854.8px;width:1.3px;height:6.4px;background:#a8a8a8;"></div>
<div class="t " style="left:1114.2px;top:837.7px;font-size:14.5px;line-height:14.5px;color:#b8b8b8;font-weight:normal;">04s</div>
<div class="r" style="left:1124.4px;top:854.8px;width:1.3px;height:6.4px;background:#a8a8a8;"></div>
<div class="t " style="left:1200.65px;top:837.7px;font-size:14.5px;line-height:14.5px;color:#b8b8b8;font-weight:normal;">05s</div>
<div class="r" style="left:1210.8500000000001px;top:854.8px;width:1.3px;height:6.4px;background:#a8a8a8;"></div>
<div class="t " style="left:1287.1000000000001px;top:837.7px;font-size:14.5px;line-height:14.5px;color:#b8b8b8;font-weight:normal;">06s</div>
<div class="r" style="left:1297.3000000000002px;top:854.8px;width:1.3px;height:6.4px;background:#a8a8a8;"></div>
<div class="t " style="left:1373.55px;top:837.7px;font-size:14.5px;line-height:14.5px;color:#b8b8b8;font-weight:normal;">07s</div>
<div class="r" style="left:1383.75px;top:854.8px;width:1.3px;height:6.4px;background:#a8a8a8;"></div>
<div class="t " style="left:1460.0000000000002px;top:837.7px;font-size:14.5px;line-height:14.5px;color:#b8b8b8;font-weight:normal;">08s</div>
<div class="r" style="left:1470.2000000000003px;top:854.8px;width:1.3px;height:6.4px;background:#a8a8a8;"></div>
<div class="t " style="left:1546.45px;top:837.7px;font-size:14.5px;line-height:14.5px;color:#b8b8b8;font-weight:normal;">09s</div>
<div class="r" style="left:1556.65px;top:854.8px;width:1.3px;height:6.4px;background:#a8a8a8;"></div>
<div class="t " style="left:1632.9px;top:837.7px;font-size:14.5px;line-height:14.5px;color:#b8b8b8;font-weight:normal;">10s</div>
<div class="r" style="left:1643.1000000000001px;top:854.8px;width:1.3px;height:6.4px;background:#a8a8a8;"></div>
<div class="t " style="left:1719.3500000000001px;top:837.7px;font-size:14.5px;line-height:14.5px;color:#b8b8b8;font-weight:normal;">11s</div>
<div class="r" style="left:1729.5500000000002px;top:854.8px;width:1.3px;height:6.4px;background:#a8a8a8;"></div>
<div class="t " style="left:1805.8000000000002px;top:837.7px;font-size:14.5px;line-height:14.5px;color:#b8b8b8;font-weight:normal;">12s</div>
<div class="r" style="left:1816.0000000000002px;top:854.8px;width:1.3px;height:6.4px;background:#a8a8a8;"></div>
<div class="t " style="left:1892.2500000000002px;top:837.7px;font-size:14.5px;line-height:14.5px;color:#b8b8b8;font-weight:normal;">13s</div>
<div class="r" style="left:1902.4500000000003px;top:854.8px;width:1.3px;height:6.4px;background:#a8a8a8;"></div>
<div class="r" style="left:769px;top:862px;width:1206px;height:1px;background:#151515;"></div>
<div class="r" style="left:777px;top:862.5px;width:1187px;height:23px;background:#0e0e0e;"></div>
<div class="r" style="left:777.6px;top:864px;width:1186px;height:20.5px;background:#676767;"></div>
<svg class="s" style="left:769.6px;top:864px;" width="8" height="21" viewBox="0 0 8 21"><path d="M8 0 V21 H5 A5 5 0 0 1 0 16 V5 A5 5 0 0 1 5 0Z" fill="#2f8ff0"/></svg>
<svg class="s" style="left:1963.6px;top:864px;" width="8" height="21" viewBox="0 0 8 21"><path d="M0 0 V21 H3 A5 5 0 0 0 8 16 V5 A5 5 0 0 0 3 0Z" fill="#2f8ff0"/></svg>
<div class="r" style="left:769px;top:885.2px;width:1206px;height:6.5px;background:#232323;"></div>
<div class="r" style="left:769px;top:891.7px;width:1206px;height:23.3px;background:#2b2b2b;"></div>
<div class="r" style="left:769px;top:891.7px;width:9.6px;height:23.3px;background:#444;"></div>
<div class="r" style="left:778.6px;top:892.5px;width:1183.4px;height:22px;background:#9b9ac4;background:linear-gradient(#aaa9d0,#9594c0 60%,#8c8bb8);"></div>
<div class="r" style="left:778.6px;top:892.5px;width:1.5px;height:22px;background:#d8d8f0;"></div>
<div class="r" style="left:1962px;top:891.7px;width:13px;height:23.3px;background:#3a3a3a;"></div>
<div class="r" style="left:769px;top:914.6px;width:1206px;height:287px;background:#343434;"></div>
<div class="r" style="left:769px;top:914.6px;width:9px;height:287px;background:#262626;"></div>
<div class="r" style="left:1963px;top:914.6px;width:10.5px;height:287px;background:#2a2a2a;"></div>
<div class="r" style="left:769px;top:938.8px;width:1206px;height:1.5px;background:#1e1e1e;"></div>
<div class="r" style="left:769px;top:963.2px;width:1206px;height:1.5px;background:#1e1e1e;"></div>
<div class="r" style="left:769px;top:987.7px;width:1206px;height:1.5px;background:#1e1e1e;"></div>
<div class="r" style="left:769px;top:1012.1px;width:1206px;height:1.5px;background:#1e1e1e;"></div>
<div class="r" style="left:769px;top:1036.5px;width:1206px;height:1.5px;background:#1e1e1e;"></div>
<div class="r" style="left:769px;top:1061.0px;width:1206px;height:1.5px;background:#1e1e1e;"></div>
<div class="r" style="left:769px;top:1085.4px;width:1206px;height:1.5px;background:#1e1e1e;"></div>
<div class="r" style="left:769px;top:1109.8px;width:1206px;height:1.5px;background:#1e1e1e;"></div>
<div class="r" style="left:769px;top:1134.2px;width:1206px;height:1.5px;background:#1e1e1e;"></div>
<div class="r" style="left:769px;top:1158.7px;width:1206px;height:1.5px;background:#1e1e1e;"></div>
<div class="r" style="left:769px;top:1183.1px;width:1206px;height:1.5px;background:#1e1e1e;"></div>
<div class="r" style="left:769px;top:1207.5px;width:1206px;height:1.5px;background:#1e1e1e;"></div>
<div class="r" style="left:1073px;top:843px;width:1.6px;height:358px;background:#2f8ff0;"></div>
<svg class="s" style="left:1065.8px;top:841.4px;" width="16" height="19" viewBox="0 0 16 19"><path d="M0 0 H16 V9 L8 18.5 L0 9Z" fill="#2f8ff0"/><path d="M5.5 8.5 H10.5 M8 8.5 V15" stroke="#0b3560" stroke-width="1.1"/></svg>
<svg class="s" style="left:1068.5px;top:920px;" width="10" height="17" viewBox="0 0 10 17"><path d="M1 1.2 H9 M1 15.8 H9" stroke="#c4c4c4" stroke-width="2"/><path d="M3.4 1 V16 M6.6 1 V16" stroke="#c4c4c4" stroke-width="1.4"/></svg>
<svg class="s" style="left:1068.5px;top:944.5px;" width="10" height="17" viewBox="0 0 10 17"><path d="M1 1.2 H9 M1 15.8 H9" stroke="#c4c4c4" stroke-width="2"/><path d="M3.4 1 V16 M6.6 1 V16" stroke="#c4c4c4" stroke-width="1.4"/></svg>
<svg class="s" style="left:1068.5px;top:993.5px;" width="10" height="17" viewBox="0 0 10 17"><path d="M1 1.2 H9 M1 15.8 H9" stroke="#c4c4c4" stroke-width="2"/><path d="M3.4 1 V16 M6.6 1 V16" stroke="#c4c4c4" stroke-width="1.4"/></svg>
<svg class="s" style="left:1068.5px;top:1090.5px;" width="10" height="17" viewBox="0 0 10 17"><path d="M1 1.2 H9 M1 15.8 H9" stroke="#c4c4c4" stroke-width="2"/><path d="M3.4 1 V16 M6.6 1 V16" stroke="#c4c4c4" stroke-width="1.4"/></svg>
<svg class="s" style="left:1068.5px;top:1115px;" width="10" height="17" viewBox="0 0 10 17"><path d="M1 1.2 H9 M1 15.8 H9" stroke="#c4c4c4" stroke-width="2"/><path d="M3.4 1 V16 M6.6 1 V16" stroke="#c4c4c4" stroke-width="1.4"/></svg>
<svg class="s" style="left:1068.5px;top:1139.5px;" width="10" height="17" viewBox="0 0 10 17"><path d="M1 1.2 H9 M1 15.8 H9" stroke="#c4c4c4" stroke-width="2"/><path d="M3.4 1 V16 M6.6 1 V16" stroke="#c4c4c4" stroke-width="1.4"/></svg>
<svg class="s" style="left:1068.5px;top:1066px;" width="10" height="17" viewBox="0 0 10 17"><path d="M1 1.2 H9 M1 15.8 H9" stroke="#c4c4c4" stroke-width="2"/><path d="M3.4 1 V16 M6.6 1 V16" stroke="#c4c4c4" stroke-width="1.4"/></svg>
<svg class="s" style="left:1060px;top:1071px;" width="300" height="8" viewBox="0 0 300 8"><circle cx="29.2" cy="4" r="3.6" fill="#c8c8c8"/><circle cx="44.2" cy="4" r="3.6" fill="#c8c8c8"/><circle cx="48.5" cy="4" r="3.6" fill="#c8c8c8"/><circle cx="52.2" cy="4" r="3.6" fill="#c8c8c8"/><circle cx="62.0" cy="4" r="3.6" fill="#c8c8c8"/><circle cx="65.5" cy="4" r="3.6" fill="#c8c8c8"/><circle cx="78.5" cy="4" r="3.6" fill="#c8c8c8"/><circle cx="86.0" cy="4" r="3.6" fill="#c8c8c8"/><circle cx="89.0" cy="4" r="3.6" fill="#c8c8c8"/><circle cx="104.0" cy="4" r="3.6" fill="#c8c8c8"/><circle cx="113.0" cy="4" r="3.6" fill="#c8c8c8"/><circle cx="124.3" cy="4" r="3.6" fill="#c8c8c8"/><circle cx="133.0" cy="4" r="3.6" fill="#c8c8c8"/><circle cx="146.7" cy="4" r="3.6" fill="#c8c8c8"/><circle cx="155.3" cy="4" r="3.6" fill="#c8c8c8"/><circle cx="167.5" cy="4" r="3.6" fill="#c8c8c8"/><circle cx="174.5" cy="4" r="3.6" fill="#c8c8c8"/><circle cx="178.7" cy="4" r="3.6" fill="#c8c8c8"/><circle cx="193.0" cy="4" r="3.6" fill="#c8c8c8"/><circle cx="199.5" cy="4" r="3.6" fill="#c8c8c8"/><circle cx="210.7" cy="4" r="3.6" fill="#c8c8c8"/><circle cx="217.0" cy="4" r="3.6" fill="#c8c8c8"/><circle cx="220.3" cy="4" r="3.6" fill="#c8c8c8"/><circle cx="239.0" cy="4" r="3.6" fill="#c8c8c8"/><circle cx="244.4" cy="4" r="3.6" fill="#c8c8c8"/><circle cx="290.8" cy="4" r="3.6" fill="#c8c8c8"/></svg>
<svg class="s" style="left:1066px;top:1068px;" width="8" height="14" viewBox="0 0 8 14"><path d="M7 1 A6 6 0 0 0 7 13" stroke="#c8c8c8" stroke-width="2" fill="none"/></svg>
<svg class="s" style="left:772.7px;top:1165.7px;" width="13" height="13" viewBox="0 0 13 13"><path d="M0.5 0.5 H12.5 V2.5 L8 6.5 L12.5 10.5 V12.5 H0.5 V10.5 L5 6.5 L0.5 2.5Z" fill="#c8c8c8"/></svg>
<svg class="s" style="left:772.7px;top:1189.0px;" width="13" height="13" viewBox="0 0 13 13"><path d="M0.5 0.5 H12.5 V2.5 L8 6.5 L12.5 10.5 V12.5 H0.5 V10.5 L5 6.5 L0.5 2.5Z" fill="#c8c8c8"/></svg>
<svg class="s" style="left:941.8px;top:1165.7px;" width="13" height="13" viewBox="0 0 13 13"><path d="M0.5 0.5 H12.5 V2.5 L8 6.5 L12.5 10.5 V12.5 H0.5 V10.5 L5 6.5 L0.5 2.5Z" fill="#c8c8c8"/></svg>
<svg class="s" style="left:941.8px;top:1189.0px;" width="13" height="13" viewBox="0 0 13 13"><path d="M0.5 0.5 H12.5 V2.5 L8 6.5 L12.5 10.5 V12.5 H0.5 V10.5 L5 6.5 L0.5 2.5Z" fill="#c8c8c8"/></svg>
<svg class="s" style="left:1164.3px;top:1165.7px;" width="13" height="13" viewBox="0 0 13 13"><path d="M0.5 0.5 H12.5 V2.5 L8 6.5 L12.5 10.5 V12.5 H0.5 V10.5 L5 6.5 L0.5 2.5Z" fill="#c8c8c8"/></svg>
<svg class="s" style="left:1164.3px;top:1189.0px;" width="13" height="13" viewBox="0 0 13 13"><path d="M0.5 0.5 H12.5 V2.5 L8 6.5 L12.5 10.5 V12.5 H0.5 V10.5 L5 6.5 L0.5 2.5Z" fill="#c8c8c8"/></svg>
<svg class="s" style="left:1664.5px;top:1165.7px;" width="13" height="13" viewBox="0 0 13 13"><path d="M0.5 0.5 H12.5 V2.5 L8 6.5 L12.5 10.5 V12.5 H0.5 V10.5 L5 6.5 L0.5 2.5Z" fill="#c8c8c8"/></svg>
<svg class="s" style="left:1664.5px;top:1189.0px;" width="13" height="13" viewBox="0 0 13 13"><path d="M0.5 0.5 H12.5 V2.5 L8 6.5 L12.5 10.5 V12.5 H0.5 V10.5 L5 6.5 L0.5 2.5Z" fill="#c8c8c8"/></svg>
<svg class="s" style="left:1977.5px;top:865.7px;" width="17" height="21" viewBox="0 0 17 21"><path d="M0 0 H17 V13 L8.5 20.5 L0 13Z" fill="#b4b4b4"/></svg>
<svg class="s" style="left:1975px;top:894px;" width="22" height="20" viewBox="0 0 22 20"><path d="M1 10 L9 2 V7 H21 V14 H9" fill="none" stroke="#b0b0b0" stroke-width="1.7"/><path d="M10 7 H21 V14 H10Z" fill="#b0b0b0"/><circle cx="10" cy="13.5" r="4" fill="#262626" stroke="#b0b0b0" stroke-width="1.7"/></svg>
<div class="r" style="left:1975px;top:918px;width:24px;height:283px;background:#1f1f1f;"></div>
<div class="r" style="left:1977px;top:921px;width:18px;height:232px;background:#2c2c2c;border-radius:9px;"></div>
<div class="r" style="left:769px;top:1200px;width:1230px;height:28px;background:#1e1e1e;"></div>
<div class="r" style="left:769px;top:1201px;width:153px;height:27px;background:#262626;"></div>
<svg class="s" style="left:776px;top:1209px;" width="15" height="8" viewBox="0 0 15 8"><path d="M0 7.5 L5 2 L7 4 L9 0.5 L15 7.5Z" fill="#b8b8b8"/></svg>
<div class="r" style="left:820px;top:1213.5px;width:55px;height:2px;background:#3c3c3c;"></div>
<svg class="s" style="left:804px;top:1206px;" width="17" height="17" viewBox="0 0 17 17"><circle cx="8.5" cy="8.5" r="6.5" fill="#262626" stroke="#b8b8b8" stroke-width="2"/></svg>
<svg class="s" style="left:891px;top:1207px;" width="25" height="11" viewBox="0 0 25 11"><path d="M0 10.5 L5 4 L8 7 L13 0.5 L24.5 10.5Z" fill="#b8b8b8"/><path d="M5 10.5 L9 5" stroke="#262626" stroke-width="1.4"/></svg>
<svg class="s" style="left:0;top:0" width="1999" height="1228" viewBox="0 0 1999 1228"><defs><pattern id="chk" x="646" y="104.5" width="22.96" height="22.96" patternUnits="userSpaceOnUse"><rect width="22.96" height="22.96" fill="#ffffff"/><rect x="11.48" y="0" width="11.48" height="11.48" fill="#d5d5d5"/><rect x="0" y="11.48" width="11.48" height="11.48" fill="#d5d5d5"/></pattern><clipPath id="cv"><rect x="646" y="104.5" width="767.2" height="523.2"/></clipPath><linearGradient id="gtail" x1="650" y1="0" x2="805" y2="0" gradientUnits="userSpaceOnUse"><stop offset="0" stop-color="#f6f2f2"/><stop offset="0.5" stop-color="#f2e4dc"/><stop offset="0.8" stop-color="#f0b878"/><stop offset="1" stop-color="#f8a028"/></linearGradient><linearGradient id="gdors" x1="790" y1="150" x2="1000" y2="250" gradientUnits="userSpaceOnUse"><stop offset="0" stop-color="#e0d8d8"/><stop offset="0.2" stop-color="#f8a030"/><stop offset="0.6" stop-color="#fa9a1a"/><stop offset="1" stop-color="#f09828"/></linearGradient><linearGradient id="ganal" x1="800" y1="430" x2="960" y2="580" gradientUnits="userSpaceOnUse"><stop offset="0" stop-color="#f89628"/><stop offset="0.6" stop-color="#f88a18"/><stop offset="1" stop-color="#d0702a"/></linearGradient><linearGradient id="gbody" x1="0" y1="160" x2="0" y2="535" gradientUnits="userSpaceOnUse"><stop offset="0" stop-color="#48c8e2"/><stop offset="0.25" stop-color="#22aed0"/><stop offset="0.5" stop-color="#1788ac"/><stop offset="0.7" stop-color="#0f4c68"/><stop offset="0.88" stop-color="#0b2232"/><stop offset="1" stop-color="#1a2a38"/></linearGradient><linearGradient id="gbodyx" x1="796" y1="0" x2="1000" y2="0" gradientUnits="userSpaceOnUse"><stop offset="0" stop-color="#0c2232" stop-opacity="0.75"/><stop offset="1" stop-color="#0c2232" stop-opacity="0"/></linearGradient><linearGradient id="ghead" x1="1250" y1="220" x2="1330" y2="440" gradientUnits="userSpaceOnUse"><stop offset="0" stop-color="#3a8cb4"/><stop offset="0.35" stop-color="#2ea2d4"/><stop offset="0.6" stop-color="#30aadc"/><stop offset="0.82" stop-color="#5a98ac"/><stop offset="1" stop-color="#a8a488"/></linearGradient><linearGradient id="gbelly" x1="0" y1="420" x2="0" y2="520" gradientUnits="userSpaceOnUse"><stop offset="0" stop-color="#3a6a80" stop-opacity="0"/><stop offset="0.5" stop-color="#7a8288" stop-opacity="0.85"/><stop offset="1" stop-color="#8a8a84" stop-opacity="0.9"/></linearGradient><pattern id="scl" x="0" y="0" width="19" height="33" patternUnits="userSpaceOnUse" patternTransform="rotate(10)"><path d="M0 16.5 L9.5 0 L19 16.5 L9.5 33 Z" fill="none" stroke="#e8fcff" stroke-width="3.2"/></pattern><pattern id="scl2" x="0" y="0" width="19" height="33" patternUnits="userSpaceOnUse" patternTransform="rotate(10)"><path d="M0 16.5 L9.5 0 L19 16.5 L9.5 33 Z" fill="none" stroke="#3cb6d6" stroke-width="2.4"/></pattern><linearGradient id="gsclm" x1="0" y1="160" x2="0" y2="530" gradientUnits="userSpaceOnUse"><stop offset="0" stop-color="#fff" stop-opacity="1"/><stop offset="0.4" stop-color="#fff" stop-opacity="0.85"/><stop offset="0.65" stop-color="#fff" stop-opacity="0.3"/><stop offset="1" stop-color="#fff" stop-opacity="0"/></linearGradient><linearGradient id="gsclm2" x1="0" y1="160" x2="0" y2="530" gradientUnits="userSpaceOnUse"><stop offset="0" stop-color="#fff" stop-opacity="0.2"/><stop offset="0.5" stop-color="#fff" stop-opacity="0.9"/><stop offset="1" stop-color="#fff" stop-opacity="0.55"/></linearGradient><mask id="msc"><rect x="640" y="100" width="780" height="540" fill="url(#gsclm)"/></mask><mask id="msc2"><rect x="640" y="100" width="780" height="540" fill="url(#gsclm2)"/></mask><radialGradient id="gbelly2" cx="1235" cy="480" r="95" gradientUnits="userSpaceOnUse" gradientTransform="translate(1235 480) scale(1.3 0.6) translate(-1235 -480)"><stop offset="0" stop-color="#8a9096" stop-opacity="0.95"/><stop offset="0.6" stop-color="#6a7a84" stop-opacity="0.8"/><stop offset="1" stop-color="#3a5a6a" stop-opacity="0"/></radialGradient><filter id="blur3"><feGaussianBlur stdDeviation="3"/></filter><filter id="blur6"><feGaussianBlur stdDeviation="6"/></filter><clipPath id="cbody"><path d="M796.0 322.0 C806.8 302.8 832.8 317.8 850.0 314.0 C867.2 310.2 875.2 314.6 882.0 303.0 C888.8 291.4 880.8 272.2 884.0 256.0 C887.2 239.8 889.8 233.8 898.0 222.0 C906.2 210.2 912.6 205.2 925.0 197.0 C937.4 188.8 946.0 186.2 960.0 181.0 C974.0 175.8 977.0 174.2 995.0 171.0 C1013.0 167.8 1027.0 166.8 1050.0 165.0 C1073.0 163.2 1088.0 162.6 1110.0 162.0 C1132.0 161.4 1143.6 160.8 1160.0 162.0 C1176.4 163.2 1178.6 163.2 1192.0 168.0 C1205.4 172.8 1212.2 177.2 1227.0 186.0 C1241.8 194.8 1250.4 201.0 1266.0 212.0 C1281.6 223.0 1289.4 229.6 1305.0 241.0 C1320.6 252.4 1329.4 256.6 1344.0 269.0 C1358.6 281.4 1368.2 292.0 1378.0 303.0 C1387.8 314.0 1386.8 315.6 1393.0 324.0 C1399.2 332.4 1406.8 336.2 1409.0 345.0 C1411.2 353.8 1406.2 361.0 1404.0 368.0 C1401.8 375.0 1408.0 368.8 1398.0 380.0 C1388.0 391.2 1371.6 409.4 1354.0 424.0 C1336.4 438.6 1327.6 441.6 1310.0 453.0 C1292.4 464.4 1283.6 471.0 1266.0 481.0 C1248.4 491.0 1245.2 494.8 1222.0 503.0 C1198.8 511.2 1186.4 515.8 1150.0 522.0 C1113.6 528.2 1070.0 532.4 1040.0 534.0 C1010.0 535.6 1019.0 534.2 1000.0 530.0 C981.0 525.8 963.2 523.6 945.0 513.0 C926.8 502.4 922.2 494.6 909.0 477.0 C895.8 459.4 896.2 436.8 879.0 425.0 C861.8 413.2 839.6 421.0 823.0 418.0 C806.4 415.0 801.4 429.2 796.0 410.0 C790.6 390.8 785.2 341.2 796.0 322.0 Z"/></clipPath><clipPath id="cdors"><path d="M782.7 174.3 L784.6 158.6 L794.4 143.0 L816.0 129.3 L845.2 121.5 L894.0 113.7 L960.0 107.8 L992.0 111.7 L1049.4 119.5 L1080.7 120.8 L1117.2 126.0 L1156.3 136.5 L1192.8 167.8 L1190.0 176.0 L1149.0 170.0 L1070.0 172.0 L992.0 184.0 L940.0 203.0 L905.0 228.0 L890.0 262.0 L882.4 303.3 L858.9 301.3 L841.3 293.5 L827.6 276.0 L819.8 260.3 L812.0 236.8 L802.2 221.2 L794.4 207.5 L788.6 193.8 Z"/></clipPath><clipPath id="ctail"><path d="M649.8 236.8 L669.3 234.9 L698.6 240.7 L731.9 256.4 L755.3 272.0 L776.8 287.6 L788.6 305.2 L810.0 319.0 L800.0 330.0 L800.0 412.0 L815.9 422.8 L781.7 452.1 L750.0 481.4 L725.5 491.2 L696.6 495.9 L664.0 497.5 L652.6 482.9 L654.2 466.6 L660.7 442.1 L670.5 409.6 L678.7 368.9 L680.3 344.4 L675.4 320.0 L665.4 285.7 L653.7 256.4 Z"/></clipPath><clipPath id="cfish"><path d="M649.8 236.8 L669.3 234.9 L698.6 240.7 L731.9 256.4 L755.3 272.0 L776.8 287.6 L788.6 305.2 L810.0 319.0 L819.8 319.9 L845.2 317.0 L870.6 309.2 L882.4 303.3 L858.9 301.3 L841.3 293.5 L827.6 276.0 L819.8 260.3 L812.0 236.8 L802.2 221.2 L794.4 207.5 L788.6 193.8 L782.7 174.3 L784.6 158.6 L794.4 143.0 L816.0 129.3 L845.2 121.5 L894.0 113.7 L960.0 107.8 L992.0 111.7 L1049.4 119.5 L1080.7 120.8 L1117.2 126.0 L1156.3 136.5 L1192.8 167.8 L1226.6 186.0 L1265.7 212.0 L1304.8 240.7 L1343.9 269.4 L1377.8 303.3 L1393.4 324.1 L1409.0 345.0 L1403.8 368.4 L1398.2 380.0 L1354.2 424.0 L1310.2 452.6 L1266.2 481.3 L1222.1 503.3 L1213.3 512.0 L1191.3 540.7 L1156.1 562.7 L1134.0 571.5 L1107.7 582.5 L1092.3 599.0 L1060.0 608.0 L1000.0 623.0 L1046.0 589.0 L1101.0 556.0 L1151.7 518.7 L1100.0 524.0 L1041.6 534.0 L1006.4 553.9 L980.0 560.5 L969.7 562.0 L933.1 570.6 L896.5 571.8 L859.8 574.3 L825.6 569.4 L801.2 557.2 L790.2 537.6 L791.4 501.0 L798.8 466.8 L811.0 440.0 L825.6 422.8 L852.5 421.6 L877.0 424.0 L825.6 420.4 L815.9 422.8 L781.7 452.1 L750.0 481.4 L725.5 491.2 L696.6 495.9 L664.0 497.5 L652.6 482.9 L654.2 466.6 L660.7 442.1 L670.5 409.6 L678.7 368.9 L680.3 344.4 L675.4 320.0 L665.4 285.7 L653.7 256.4 Z"/></clipPath><clipPath id="canal"><path d="M877.0 424.0 L852.5 421.6 L825.6 422.8 L811.0 440.0 L798.8 466.8 L791.4 501.0 L790.2 537.6 L801.2 557.2 L825.6 569.4 L859.8 574.3 L896.5 571.8 L933.1 570.6 L969.7 562.0 L1006.0 554.0 L1037.0 532.0 L1010.0 515.0 L960.0 495.0 L920.0 460.0 L895.0 418.0 Z"/></clipPath><radialGradient id="geye" cx="1317.5" cy="317.5" r="30" gradientUnits="userSpaceOnUse"><stop offset="0.7" stop-color="#1a2a38"/><stop offset="0.85" stop-color="#5a7080"/><stop offset="1" stop-color="#2a5a78"/></radialGradient></defs><g clip-path="url(#cv)"><rect x="646" y="104.5" width="767.2" height="523.2" fill="url(#chk)"/><path d="M649.8 236.8 L669.3 234.9 L698.6 240.7 L731.9 256.4 L755.3 272.0 L776.8 287.6 L788.6 305.2 L810.0 319.0 L800.0 330.0 L800.0 412.0 L815.9 422.8 L781.7 452.1 L750.0 481.4 L725.5 491.2 L696.6 495.9 L664.0 497.5 L652.6 482.9 L654.2 466.6 L660.7 442.1 L670.5 409.6 L678.7 368.9 L680.3 344.4 L675.4 320.0 L665.4 285.7 L653.7 256.4 Z" fill="url(#gtail)"/><g clip-path="url(#ctail)"><path d="M815 366 L736.1 204.2" stroke="#b8683a" stroke-width="2.8" opacity="0.6"/><path d="M815 366 L723.9 210.8" stroke="#b8683a" stroke-width="2.8" opacity="0.6"/><path d="M815 366 L712.2 218.2" stroke="#b8683a" stroke-width="2.8" opacity="0.6"/><path d="M815 366 L701.1 226.6" stroke="#b8683a" stroke-width="2.8" opacity="0.6"/><path d="M815 366 L690.7 235.8" stroke="#b8683a" stroke-width="2.8" opacity="0.6"/><path d="M815 366 L681.1 245.7" stroke="#b8683a" stroke-width="2.8" opacity="0.6"/><path d="M815 366 L672.2 256.4" stroke="#b8683a" stroke-width="2.8" opacity="0.6"/><path d="M815 366 L664.2 267.7" stroke="#b8683a" stroke-width="2.8" opacity="0.6"/><path d="M815 366 L657.1 279.6" stroke="#b8683a" stroke-width="2.8" opacity="0.6"/><path d="M815 366 L650.9 292.0" stroke="#b8683a" stroke-width="2.8" opacity="0.6"/><path d="M815 366 L645.7 304.8" stroke="#b8683a" stroke-width="2.8" opacity="0.6"/><path d="M815 366 L641.5 318.1" stroke="#b8683a" stroke-width="2.8" opacity="0.6"/><path d="M815 366 L638.3 331.5" stroke="#b8683a" stroke-width="2.8" opacity="0.6"/><path d="M815 366 L636.2 345.2" stroke="#b8683a" stroke-width="2.8" opacity="0.6"/><path d="M815 366 L635.1 359.1" stroke="#b8683a" stroke-width="2.8" opacity="0.6"/><path d="M815 366 L635.1 372.9" stroke="#b8683a" stroke-width="2.8" opacity="0.6"/><path d="M815 366 L636.2 386.8" stroke="#b8683a" stroke-width="2.8" opacity="0.6"/><path d="M815 366 L638.3 400.5" stroke="#b8683a" stroke-width="2.8" opacity="0.6"/><path d="M815 366 L641.5 413.9" stroke="#b8683a" stroke-width="2.8" opacity="0.6"/><path d="M815 366 L645.7 427.2" stroke="#b8683a" stroke-width="2.8" opacity="0.6"/><path d="M815 366 L650.9 440.0" stroke="#b8683a" stroke-width="2.8" opacity="0.6"/><path d="M815 366 L657.1 452.4" stroke="#b8683a" stroke-width="2.8" opacity="0.6"/><path d="M815 366 L664.2 464.3" stroke="#b8683a" stroke-width="2.8" opacity="0.6"/><path d="M815 366 L672.2 475.6" stroke="#b8683a" stroke-width="2.8" opacity="0.6"/><path d="M815 366 L681.1 486.3" stroke="#b8683a" stroke-width="2.8" opacity="0.6"/><path d="M815 366 L690.7 496.2" stroke="#b8683a" stroke-width="2.8" opacity="0.6"/><path d="M815 366 L701.1 505.4" stroke="#b8683a" stroke-width="2.8" opacity="0.6"/><path d="M815 366 L712.2 513.8" stroke="#b8683a" stroke-width="2.8" opacity="0.6"/><path d="M815 366 L723.9 521.2" stroke="#b8683a" stroke-width="2.8" opacity="0.6"/><path d="M815 366 L736.1 527.8" stroke="#b8683a" stroke-width="2.8" opacity="0.6"/><ellipse cx="800" cy="366" rx="40" ry="70" fill="#f39a2c" opacity="0.45" filter="url(#blur6)"/></g><path d="M782.7 174.3 L784.6 158.6 L794.4 143.0 L816.0 129.3 L845.2 121.5 L894.0 113.7 L960.0 107.8 L992.0 111.7 L1049.4 119.5 L1080.7 120.8 L1117.2 126.0 L1156.3 136.5 L1192.8 167.8 L1190.0 176.0 L1149.0 170.0 L1070.0 172.0 L992.0 184.0 L940.0 203.0 L905.0 228.0 L890.0 262.0 L882.4 303.3 L858.9 301.3 L841.3 293.5 L827.6 276.0 L819.8 260.3 L812.0 236.8 L802.2 221.2 L794.4 207.5 L788.6 193.8 Z" fill="url(#gdors)"/><g clip-path="url(#cdors)"><path d="M876.0 300.0 Q822.4 217.2 752.9 142.4" stroke="#4a1e06" stroke-width="2.2" fill="none" opacity="0.75"/><path d="M877.8 291.6 Q824.0 209.0 754.1 134.4" stroke="#ffd080" stroke-width="1.5" fill="none" opacity="0.25"/><path d="M879.5 283.2 Q825.5 200.8 755.4 126.4" stroke="#4a1e06" stroke-width="2.2" fill="none" opacity="0.75"/><path d="M881.3 274.8 Q827.0 192.6 756.7 118.4" stroke="#ffd080" stroke-width="1.5" fill="none" opacity="0.25"/><path d="M883.1 266.4 Q828.5 184.4 758.0 110.4" stroke="#4a1e06" stroke-width="2.2" fill="none" opacity="0.75"/><path d="M885.4 258.2 Q830.6 176.4 759.9 102.6" stroke="#ffd080" stroke-width="1.5" fill="none" opacity="0.25"/><path d="M888.5 250.2 Q833.4 168.6 762.4 94.9" stroke="#4a1e06" stroke-width="2.2" fill="none" opacity="0.75"/><path d="M891.5 242.2 Q836.2 160.7 765.0 87.3" stroke="#ffd080" stroke-width="1.5" fill="none" opacity="0.25"/><path d="M894.5 234.2 Q839.0 152.9 767.5 79.7" stroke="#4a1e06" stroke-width="2.2" fill="none" opacity="0.75"/><path d="M897.6 226.1 Q841.8 145.1 770.1 72.0" stroke="#ffd080" stroke-width="1.5" fill="none" opacity="0.25"/><path d="M903.4 220.0 Q847.4 139.2 775.4 66.3" stroke="#4a1e06" stroke-width="2.2" fill="none" opacity="0.75"/><path d="M909.7 214.2 Q853.5 133.5 781.2 60.9" stroke="#ffd080" stroke-width="1.5" fill="none" opacity="0.25"/><path d="M916.0 208.4 Q859.5 127.9 787.1 55.4" stroke="#4a1e06" stroke-width="2.2" fill="none" opacity="0.75"/><path d="M922.3 202.5 Q865.6 122.3 792.9 50.0" stroke="#ffd080" stroke-width="1.5" fill="none" opacity="0.25"/><path d="M929.4 198.0 Q872.5 117.9 799.5 45.9" stroke="#4a1e06" stroke-width="2.2" fill="none" opacity="0.75"/><path d="M937.2 194.4 Q880.0 114.6 806.9 42.7" stroke="#ffd080" stroke-width="1.5" fill="none" opacity="0.25"/><path d="M945.0 190.9 Q887.6 111.2 814.2 39.6" stroke="#4a1e06" stroke-width="2.2" fill="none" opacity="0.75"/><path d="M952.8 187.3 Q895.2 107.8 821.5 36.4" stroke="#ffd080" stroke-width="1.5" fill="none" opacity="0.25"/><path d="M960.6 183.8 Q902.8 104.6 828.9 33.3" stroke="#4a1e06" stroke-width="2.2" fill="none" opacity="0.75"/><path d="M968.9 181.6 Q910.8 102.5 836.7 31.5" stroke="#ffd080" stroke-width="1.5" fill="none" opacity="0.25"/><path d="M977.2 179.3 Q918.8 100.4 844.5 29.6" stroke="#4a1e06" stroke-width="2.2" fill="none" opacity="0.75"/><path d="M985.4 177.0 Q926.9 98.4 852.3 27.8" stroke="#ffd080" stroke-width="1.5" fill="none" opacity="0.25"/><path d="M993.7 174.7 Q934.9 96.3 860.1 25.9" stroke="#4a1e06" stroke-width="2.2" fill="none" opacity="0.75"/><path d="M1002.0 172.8 Q943.0 94.6 868.0 24.3" stroke="#ffd080" stroke-width="1.5" fill="none" opacity="0.25"/><path d="M1010.6 171.8 Q951.3 93.8 876.0 23.8" stroke="#4a1e06" stroke-width="2.2" fill="none" opacity="0.75"/><path d="M1019.1 170.8 Q959.6 93.0 884.1 23.2" stroke="#ffd080" stroke-width="1.5" fill="none" opacity="0.25"/><path d="M1027.6 169.8 Q967.9 92.2 892.2 22.6" stroke="#2a2a30" stroke-width="3.0" fill="none" opacity="0.8"/><path d="M1036.1 168.8 Q976.2 91.4 900.2 22.0" stroke="#ffd080" stroke-width="1.5" fill="none" opacity="0.25"/><path d="M1044.6 167.8 Q984.4 90.6 908.3 21.5" stroke="#2a2a30" stroke-width="3.0" fill="none" opacity="0.8"/><path d="M1053.1 166.8 Q992.7 89.9 916.3 20.9" stroke="#ffd080" stroke-width="1.5" fill="none" opacity="0.25"/><path d="M1061.7 165.9 Q1001.0 89.2 924.4 20.5" stroke="#2a2a30" stroke-width="3.0" fill="none" opacity="0.8"/><path d="M1070.2 165.6 Q1009.4 89.0 932.5 20.5" stroke="#ffd080" stroke-width="1.5" fill="none" opacity="0.25"/><path d="M1078.8 165.2 Q1017.7 88.9 940.6 20.6" stroke="#2a2a30" stroke-width="3.0" fill="none" opacity="0.8"/><path d="M1087.4 164.8 Q1026.1 88.7 948.8 20.6" stroke="#ffd080" stroke-width="1.5" fill="none" opacity="0.25"/><path d="M1095.9 164.5 Q1034.4 88.6 956.9 20.7" stroke="#2a2a30" stroke-width="3.0" fill="none" opacity="0.8"/><path d="M1104.5 164.1 Q1042.7 88.4 965.0 20.8" stroke="#ffd080" stroke-width="1.5" fill="none" opacity="0.25"/><path d="M1113.1 163.7 Q1051.1 88.3 973.1 20.8" stroke="#2a2a30" stroke-width="3.0" fill="none" opacity="0.8"/><path d="M1121.6 163.4 Q1059.4 88.1 981.2 20.9" stroke="#ffd080" stroke-width="1.5" fill="none" opacity="0.25"/><path d="M1130.2 163.0 Q1067.8 88.0 989.4 21.0" stroke="#2a2a30" stroke-width="3.0" fill="none" opacity="0.8"/><path d="M1138.7 163.7 Q1076.1 88.9 997.5 22.1" stroke="#ffd080" stroke-width="1.5" fill="none" opacity="0.25"/><path d="M1147.3 164.4 Q1084.4 89.9 1005.6 23.3" stroke="#2a2a30" stroke-width="3.0" fill="none" opacity="0.8"/><path d="M1155.8 165.2 Q1092.8 90.8 1013.7 24.4" stroke="#ffd080" stroke-width="1.5" fill="none" opacity="0.25"/><path d="M1164.4 165.9 Q1101.1 91.7 1021.8 25.6" stroke="#2a2a30" stroke-width="3.0" fill="none" opacity="0.8"/><path d="M1172.9 166.6 Q1109.4 92.7 1029.9 26.8" stroke="#ffd080" stroke-width="1.5" fill="none" opacity="0.25"/><path d="M1181.5 167.3 Q1117.7 93.6 1038.0 27.9" stroke="#2a2a30" stroke-width="3.0" fill="none" opacity="0.8"/><path d="M1190.0 168.0 Q1126.1 94.5 1046.1 29.1" stroke="#ffd080" stroke-width="1.5" fill="none" opacity="0.25"/><path d="M780 160 C790 220 830 280 870 305 L800 305 L770 200Z" fill="#f4f0f0" opacity="0.35" filter="url(#blur3)"/><path d="M786 165 C800 135 840 120 900 112" stroke="#f4f2f4" stroke-width="12" opacity="0.45" fill="none" filter="url(#blur3)"/><path d="M930 110 C1000 110 1060 118 1120 128 C1150 135 1175 148 1192 168" stroke="#24262c" stroke-width="26" opacity="0.55" fill="none" filter="url(#blur6)"/></g><path d="M877.0 424.0 L852.5 421.6 L825.6 422.8 L811.0 440.0 L798.8 466.8 L791.4 501.0 L790.2 537.6 L801.2 557.2 L825.6 569.4 L859.8 574.3 L896.5 571.8 L933.1 570.6 L969.7 562.0 L1006.0 554.0 L1037.0 532.0 L1010.0 515.0 L960.0 495.0 L920.0 460.0 L895.0 418.0 Z" fill="url(#ganal)"/><g clip-path="url(#canal)"><path d="M879.0 425.0 L737.8 552.1" stroke="#3a1606" stroke-width="2.2" opacity="0.55"/><path d="M882.5 431.1 L742.0 559.0" stroke="#ffb050" stroke-width="1.5" opacity="0.30"/><path d="M886.1 437.3 L746.1 565.8" stroke="#3a1606" stroke-width="2.3" opacity="0.57"/><path d="M889.6 443.4 L750.3 572.6" stroke="#ffb050" stroke-width="1.5" opacity="0.30"/><path d="M893.2 449.6 L754.4 579.4" stroke="#3a1606" stroke-width="2.4" opacity="0.59"/><path d="M896.7 455.7 L758.6 586.2" stroke="#ffb050" stroke-width="1.5" opacity="0.30"/><path d="M900.3 461.8 L762.8 593.0" stroke="#3a1606" stroke-width="2.5" opacity="0.61"/><path d="M903.8 468.0 L767.0 599.8" stroke="#ffb050" stroke-width="1.5" opacity="0.30"/><path d="M907.3 474.1 L771.1 606.6" stroke="#3a1606" stroke-width="2.6" opacity="0.63"/><path d="M911.7 479.7 L776.1 612.8" stroke="#ffb050" stroke-width="1.5" opacity="0.30"/><path d="M916.7 484.7 L781.8 618.5" stroke="#3a1606" stroke-width="2.7" opacity="0.65"/><path d="M921.7 489.7 L787.4 624.1" stroke="#ffb050" stroke-width="1.5" opacity="0.30"/><path d="M926.7 494.7 L793.1 629.8" stroke="#3a1606" stroke-width="2.8" opacity="0.67"/><path d="M931.7 499.7 L798.7 635.4" stroke="#ffb050" stroke-width="1.5" opacity="0.30"/><path d="M936.7 504.7 L804.4 641.1" stroke="#3a1606" stroke-width="2.9" opacity="0.69"/><path d="M941.7 509.7 L810.1 646.7" stroke="#ffb050" stroke-width="1.5" opacity="0.30"/><path d="M947.4 513.7 L816.4 651.4" stroke="#3a1606" stroke-width="3.0" opacity="0.72"/><path d="M954.1 515.8 L823.8 654.1" stroke="#ffb050" stroke-width="1.5" opacity="0.30"/><path d="M960.9 517.9 L831.2 656.8" stroke="#3a1606" stroke-width="3.1" opacity="0.74"/><path d="M967.7 520.0 L838.7 659.5" stroke="#ffb050" stroke-width="1.5" opacity="0.30"/><path d="M974.5 522.1 L846.1 662.2" stroke="#3a1606" stroke-width="3.2" opacity="0.76"/><path d="M981.2 524.2 L853.6 664.9" stroke="#ffb050" stroke-width="1.5" opacity="0.30"/><path d="M988.0 526.3 L861.0 667.6" stroke="#3a1606" stroke-width="3.3" opacity="0.78"/><path d="M994.8 528.4 L868.5 670.3" stroke="#ffb050" stroke-width="1.5" opacity="0.30"/><path d="M1001.6 530.1 L876.0 672.7" stroke="#3a1606" stroke-width="3.4" opacity="0.80"/><path d="M1008.7 530.5 L883.8 673.6" stroke="#ffb050" stroke-width="1.5" opacity="0.30"/><path d="M1015.8 530.9 L891.5 674.6" stroke="#3a1606" stroke-width="3.5" opacity="0.82"/><path d="M1022.8 531.2 L899.3 675.6" stroke="#ffb050" stroke-width="1.5" opacity="0.30"/><path d="M1029.9 531.6 L907.1 676.6" stroke="#3a1606" stroke-width="3.6" opacity="0.84"/><path d="M1037.0 532.0 L914.9 677.5" stroke="#ffb050" stroke-width="1.5" opacity="0.30"/><path d="M800 545 C840 575 900 575 1000 550 L1000 580 L790 580Z" fill="#3a4a60" opacity="0.35"/><path d="M900 470 C940 510 990 530 1040 534 L1000 545 C950 535 910 510 890 480Z" fill="#d8ecf4" opacity="0.45" filter="url(#blur3)"/></g><path d="M1213.0 510.0 L1191.0 541.0 L1156.0 563.0 L1108.0 582.0 L1092.0 599.0 L1060.0 608.0 L1000.0 623.0 L1046.0 589.0 L1101.0 556.0 L1140.0 530.0 L1180.0 512.0 Z" fill="#c85a28"/><path d="M1208 512 L1005 620 M1196 520 L1030 606 M1185 524 L1060 590 M1175 526 L1095 568" stroke="#3a3e4a" stroke-width="2.6" opacity="0.75"/><path d="M1202 516 L1018 614 M1190 522 L1048 598" stroke="#e8e8f0" stroke-width="1.4" opacity="0.6"/><path d="M1212 510 L1150 560" stroke="#f07030" stroke-width="4" opacity="0.6"/><path d="M1152.0 519.0 L1100.0 524.0 L1042.0 533.0 L1080.0 540.0 L1140.0 530.0 Z" fill="#e8e8ec"/><path d="M1150 520 L1045 533" stroke="#303040" stroke-width="2" opacity="0.6"/><path d="M796.0 322.0 C806.8 302.8 832.8 317.8 850.0 314.0 C867.2 310.2 875.2 314.6 882.0 303.0 C888.8 291.4 880.8 272.2 884.0 256.0 C887.2 239.8 889.8 233.8 898.0 222.0 C906.2 210.2 912.6 205.2 925.0 197.0 C937.4 188.8 946.0 186.2 960.0 181.0 C974.0 175.8 977.0 174.2 995.0 171.0 C1013.0 167.8 1027.0 166.8 1050.0 165.0 C1073.0 163.2 1088.0 162.6 1110.0 162.0 C1132.0 161.4 1143.6 160.8 1160.0 162.0 C1176.4 163.2 1178.6 163.2 1192.0 168.0 C1205.4 172.8 1212.2 177.2 1227.0 186.0 C1241.8 194.8 1250.4 201.0 1266.0 212.0 C1281.6 223.0 1289.4 229.6 1305.0 241.0 C1320.6 252.4 1329.4 256.6 1344.0 269.0 C1358.6 281.4 1368.2 292.0 1378.0 303.0 C1387.8 314.0 1386.8 315.6 1393.0 324.0 C1399.2 332.4 1406.8 336.2 1409.0 345.0 C1411.2 353.8 1406.2 361.0 1404.0 368.0 C1401.8 375.0 1408.0 368.8 1398.0 380.0 C1388.0 391.2 1371.6 409.4 1354.0 424.0 C1336.4 438.6 1327.6 441.6 1310.0 453.0 C1292.4 464.4 1283.6 471.0 1266.0 481.0 C1248.4 491.0 1245.2 494.8 1222.0 503.0 C1198.8 511.2 1186.4 515.8 1150.0 522.0 C1113.6 528.2 1070.0 532.4 1040.0 534.0 C1010.0 535.6 1019.0 534.2 1000.0 530.0 C981.0 525.8 963.2 523.6 945.0 513.0 C926.8 502.4 922.2 494.6 909.0 477.0 C895.8 459.4 896.2 436.8 879.0 425.0 C861.8 413.2 839.6 421.0 823.0 418.0 C806.4 415.0 801.4 429.2 796.0 410.0 C790.6 390.8 785.2 341.2 796.0 322.0 Z" fill="url(#gbody)"/><g clip-path="url(#cbody)"><rect x="790" y="150" width="630" height="400" fill="url(#gbodyx)"/><rect x="780" y="150" width="640" height="400" fill="url(#scl2)" mask="url(#msc2)"/><rect x="780" y="150" width="640" height="400" fill="url(#scl)" mask="url(#msc)"/><ellipse cx="1245" cy="488" rx="100" ry="50" fill="#6e7a82" opacity="0.95" filter="url(#blur6)"/><ellipse cx="1265" cy="478" rx="60" ry="25" fill="#8a8e8c" opacity="0.6" filter="url(#blur6)"/><path d="M870 310 C880 250 900 215 940 195" stroke="#08141e" stroke-width="22" fill="none" opacity="0.55" filter="url(#blur6)"/><path d="M880 302 C940 275 1050 262 1210 290" stroke="#e8f0e8" stroke-width="3" fill="none" opacity="0.45" stroke-dasharray="3 4"/><path d="M876 300 C890 240 930 195 1000 178 C1060 166 1130 163 1190 170" stroke="#e8d8b0" stroke-width="6" fill="none" opacity="0.75" stroke-dasharray="7 4"/></g><g clip-path="url(#cfish)"><path d="M1224.0 290.0 C1217.6 306.4 1212.2 317.2 1208.0 334.0 C1203.8 350.8 1200.4 360.8 1203.0 374.0 C1205.6 387.2 1212.8 390.0 1221.0 400.0 C1229.2 410.0 1230.6 415.2 1244.0 424.0 C1257.4 432.8 1270.4 441.8 1288.0 444.0 C1305.6 446.2 1310.0 447.8 1332.0 435.0 C1354.0 422.2 1383.6 393.4 1398.0 380.0 C1412.4 366.6 1401.8 375.0 1404.0 368.0 C1406.2 361.0 1411.2 353.8 1409.0 345.0 C1406.8 336.2 1399.2 332.4 1393.0 324.0 C1386.8 315.6 1387.8 314.0 1378.0 303.0 C1368.2 292.0 1358.6 281.4 1344.0 269.0 C1329.4 256.6 1320.6 252.4 1305.0 241.0 C1289.4 229.6 1279.0 209.8 1266.0 212.0 C1253.0 214.2 1248.4 236.4 1240.0 252.0 C1231.6 267.6 1230.4 273.6 1224.0 290.0 Z" fill="url(#ghead)" filter="url(#blur3)"/></g><g clip-path="url(#cfish)"><path d="M1224 292 C1206 330 1200 380 1225 405 C1250 430 1300 445 1340 432 C1365 422 1382 405 1392 390" stroke="#b0b898" stroke-width="4" fill="none" opacity="0.8"/></g><path d="M1254 330 L1266 405 L1280 432 L1272 368Z" fill="#d8dcc0" opacity="0.85"/><path d="M1278 352 L1290 392 L1284 398Z" fill="#d85020"/><g clip-path="url(#cfish)"><path d="M1375 332 C1395 340 1409 350 1407 368 C1400 380 1385 385 1372 378 C1380 365 1382 350 1375 332Z" fill="#c8b0a0"/><path d="M1380 355 L1405 360" stroke="#8a6a60" stroke-width="1.5"/></g><circle cx="1317.5" cy="317.5" r="30" fill="url(#geye)"/><circle cx="1316" cy="318" r="22" fill="#c87830"/><circle cx="1316" cy="318" r="17" fill="#3a2010"/><circle cx="1316" cy="317" r="13" fill="#06142a"/><circle cx="1313" cy="313" r="3" fill="#28486a"/><circle cx="1363" cy="304" r="3.5" fill="#9a6050"/><path d="M1188 405 L1079 322 C1068 350 1068 385 1075 410 L1188 432 Z" fill="#b8a848" opacity="0.35"/><path d="M1188 418 L1079.0 322.0" stroke="#f2d030" stroke-width="2" opacity="0.50"/><path d="M1188 418 L1077.5 327.9" stroke="#f2d030" stroke-width="2" opacity="0.58"/><path d="M1188 418 L1076.0 333.7" stroke="#f2d030" stroke-width="2" opacity="0.66"/><path d="M1188 418 L1074.7 339.6" stroke="#f2d030" stroke-width="2" opacity="0.74"/><path d="M1188 418 L1073.5 345.5" stroke="#f2d030" stroke-width="2" opacity="0.80"/><path d="M1188 418 L1072.5 351.3" stroke="#f2d030" stroke-width="2" opacity="0.85"/><path d="M1188 418 L1071.7 357.2" stroke="#f2d030" stroke-width="2" opacity="0.88"/><path d="M1188 418 L1071.2 363.1" stroke="#f2d030" stroke-width="2" opacity="0.90"/><path d="M1188 418 L1070.9 368.9" stroke="#f2d030" stroke-width="2" opacity="0.90"/><path d="M1188 418 L1070.9 374.8" stroke="#f2d030" stroke-width="2" opacity="0.88"/><path d="M1188 418 L1071.1 380.7" stroke="#f2d030" stroke-width="2" opacity="0.85"/><path d="M1188 418 L1071.6 386.5" stroke="#f2d030" stroke-width="2" opacity="0.80"/><path d="M1188 418 L1072.3 392.4" stroke="#f2d030" stroke-width="2" opacity="0.74"/><path d="M1188 418 L1073.1 398.3" stroke="#f2d030" stroke-width="2" opacity="0.66"/><path d="M1188 418 L1074.0 404.1" stroke="#f2d030" stroke-width="2" opacity="0.58"/><path d="M1188 418 L1075.0 410.0" stroke="#f2d030" stroke-width="2" opacity="0.50"/><path d="M1120 350 L1188 405 L1188 432 L1110 405Z" fill="#e8c020" opacity="0.35"/><ellipse cx="1200" cy="420" rx="22" ry="15" transform="rotate(25 1200 420)" fill="#9a9498"/><path d="M1182 400 C1195 392 1215 398 1222 412" stroke="#3a3030" stroke-width="2" fill="none" opacity="0.6"/><path d="M649.8 236.8 L669.3 234.9 L698.6 240.7 L731.9 256.4 L755.3 272.0 L776.8 287.6 L788.6 305.2 L810.0 319.0 L819.8 319.9 L845.2 317.0 L870.6 309.2 L882.4 303.3 L858.9 301.3 L841.3 293.5 L827.6 276.0 L819.8 260.3 L812.0 236.8 L802.2 221.2 L794.4 207.5 L788.6 193.8 L782.7 174.3 L784.6 158.6 L794.4 143.0 L816.0 129.3 L845.2 121.5 L894.0 113.7 L960.0 107.8 L992.0 111.7 L1049.4 119.5 L1080.7 120.8 L1117.2 126.0 L1156.3 136.5 L1192.8 167.8 L1226.6 186.0 L1265.7 212.0 L1304.8 240.7 L1343.9 269.4 L1377.8 303.3 L1393.4 324.1 L1409.0 345.0 L1403.8 368.4 L1398.2 380.0 L1354.2 424.0 L1310.2 452.6 L1266.2 481.3 L1222.1 503.3 L1213.3 512.0 L1191.3 540.7 L1156.1 562.7 L1134.0 571.5 L1107.7 582.5 L1092.3 599.0 L1060.0 608.0 L1000.0 623.0 L1046.0 589.0 L1101.0 556.0 L1151.7 518.7 L1100.0 524.0 L1041.6 534.0 L1006.4 553.9 L980.0 560.5 L969.7 562.0 L933.1 570.6 L896.5 571.8 L859.8 574.3 L825.6 569.4 L801.2 557.2 L790.2 537.6 L791.4 501.0 L798.8 466.8 L811.0 440.0 L825.6 422.8 L852.5 421.6 L877.0 424.0 L825.6 420.4 L815.9 422.8 L781.7 452.1 L750.0 481.4 L725.5 491.2 L696.6 495.9 L664.0 497.5 L652.6 482.9 L654.2 466.6 L660.7 442.1 L670.5 409.6 L678.7 368.9 L680.3 344.4 L675.4 320.0 L665.4 285.7 L653.7 256.4 Z" fill="none" stroke="#f4f000" stroke-width="2"/><circle cx="840" cy="139" r="6" fill="none" stroke="#d4d000" stroke-width="1.8"/><circle cx="974.2" cy="125.8" r="6" fill="none" stroke="#d4d000" stroke-width="1.8"/><circle cx="1062" cy="130.2" r="6" fill="none" stroke="#d4d000" stroke-width="1.8"/><circle cx="1156.7" cy="150" r="6" fill="none" stroke="#d4d000" stroke-width="1.8"/><circle cx="802.7" cy="172" r="6" fill="none" stroke="#d4d000" stroke-width="1.8"/><circle cx="835.7" cy="225.6" r="6" fill="none" stroke="#d4d000" stroke-width="1.8"/><circle cx="854.2" cy="266.5" r="6" fill="none" stroke="#d4d000" stroke-width="1.8"/><circle cx="798.3" cy="314.9" r="6" fill="none" stroke="#d4d000" stroke-width="1.8"/><circle cx="767.5" cy="444.6" r="6" fill="none" stroke="#d4d000" stroke-width="1.8"/><circle cx="739" cy="462.2" r="6" fill="none" stroke="#d4d000" stroke-width="1.8"/><circle cx="854.2" cy="451.2" r="6" fill="none" stroke="#d4d000" stroke-width="1.8"/><circle cx="822.5" cy="477.6" r="6" fill="none" stroke="#d4d000" stroke-width="1.8"/><circle cx="818.1" cy="532.5" r="6" fill="none" stroke="#d4d000" stroke-width="1.8"/><circle cx="843.6" cy="555.9" r="6" fill="none" stroke="#d4d000" stroke-width="1.8"/><circle cx="917" cy="547" r="6" fill="none" stroke="#d4d000" stroke-width="1.8"/><circle cx="983" cy="543.5" r="6" fill="none" stroke="#d4d000" stroke-width="1.8"/><circle cx="1204.2" cy="498.7" r="6" fill="none" stroke="#d4d000" stroke-width="1.8"/><circle cx="1073.2" cy="582.2" r="6" fill="none" stroke="#d4d000" stroke-width="1.8"/><circle cx="722.7" cy="251.8" r="6.8" fill="#f0ea00"/><circle cx="746" cy="280" r="6.8" fill="#f0ea00"/><circle cx="756.5" cy="332.5" r="6.8" fill="#f0ea00"/><circle cx="755" cy="407.5" r="6.8" fill="#f0ea00"/><circle cx="720.3" cy="468" r="6.8" fill="#f0ea00"/><circle cx="746.4" cy="483.5" r="6.8" fill="#f0ea00"/></g><path d="M711.2 337.9 L776 232" stroke="#14e414" stroke-width="3.6" stroke-linecap="round"/><path d="M792.5 207.5 L768 233 L781.7 240.7Z" fill="#14e414"/><path d="M720.2 365.3 L598 363.3" stroke="#14e414" stroke-width="3.6" stroke-linecap="round"/><path d="M562.2 362.7 L599.7 355.3 L599.7 371Z" fill="#14e414"/><path d="M741.4 366 L845 365.4" stroke="#14e414" stroke-width="3.6" stroke-linecap="round"/><path d="M877 365.4 L839 356 L839 375Z" fill="#14e414"/><path d="M723.4 407.1 L650 487" stroke="#14e414" stroke-width="3.6" stroke-linecap="round"/><path d="M628.2 511.4 L647.7 480 L658 489.5Z" fill="#14e414"/></svg>
</body></html>
